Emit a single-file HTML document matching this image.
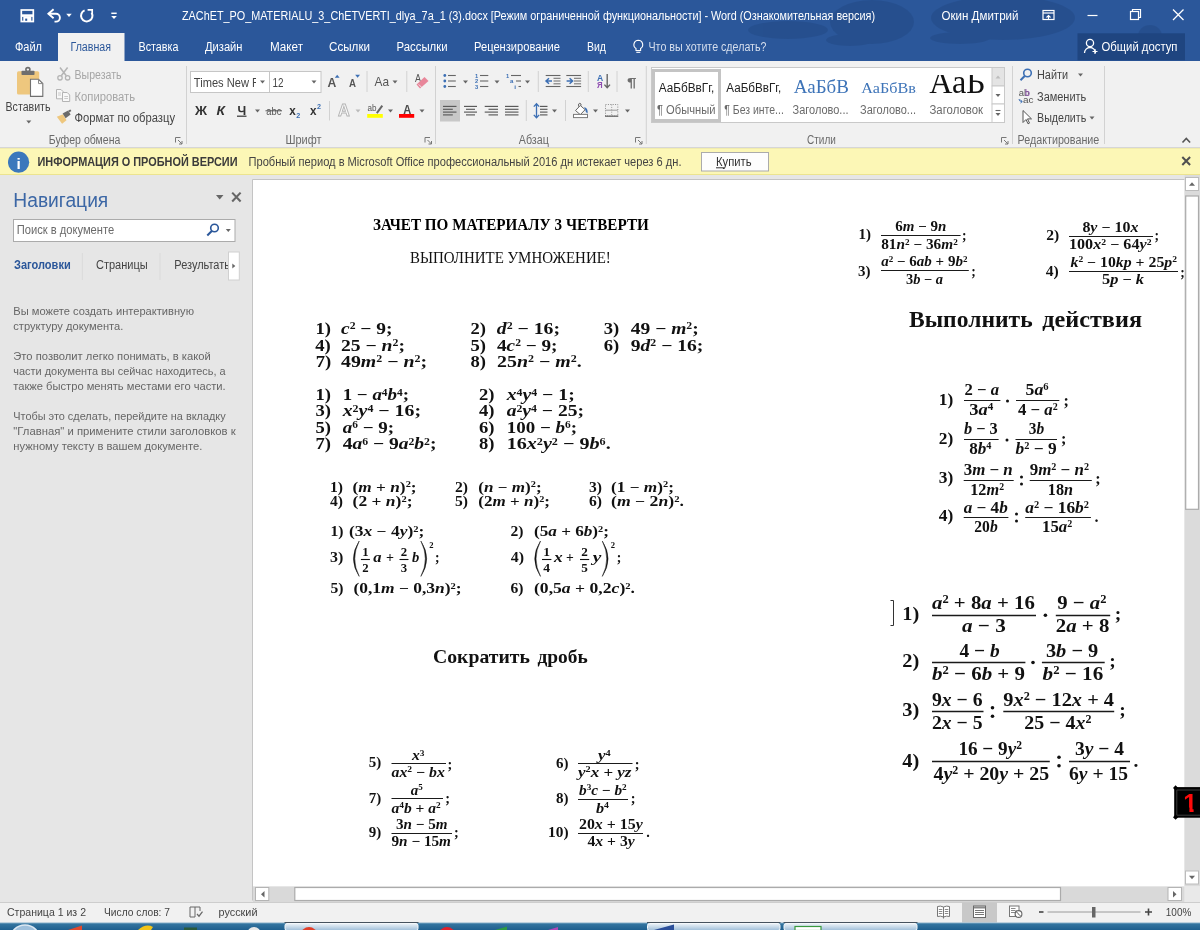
<!DOCTYPE html>
<html lang="ru"><head><meta charset="utf-8"><title>ZAChET_PO_MATERIALU_3_ChETVERTI_dlya_7a_1 (3).docx - Word</title>
<style>html,body{margin:0;padding:0;background:#e6e6e6;overflow:hidden}svg{display:block;will-change:transform}text{white-space:pre}</style></head>
<body><svg width="1200" height="930" viewBox="0 0 1200 930" font-family="'Liberation Sans',sans-serif">
<rect x="0" y="175" width="1200" height="748" fill="#e6e6e6" />
<rect x="252.5" y="180" width="932" height="706.5" fill="#fff" />
<line x1="252.5" y1="179.5" x2="1184.5" y2="179.5" stroke="#c4c4c4" stroke-width="1" />
<line x1="252.5" y1="179.5" x2="252.5" y2="886" stroke="#c4c4c4" stroke-width="1" />
<text x="13.3" y="206.8" font-size="20" fill="#3c67a5" textLength="95" lengthAdjust="spacingAndGlyphs" font-family="'Liberation Sans','DejaVu Sans',sans-serif" >Навигация</text>
<path d="M215.95,194.95 h7.5 l-3.75,4.5 z" fill="#666" />
<path d="M232.2,192.6 l8.4,8.8 M240.6,192.6 l-8.4,8.8" fill="none" stroke="#666" stroke-width="2.1" />
<rect x="13.5" y="219.5" width="221.5" height="22" fill="#fff" stroke="#ababab" stroke-width="1" />
<text x="16.7" y="234.3" font-size="12" fill="#6a6a6a" textLength="97.5" lengthAdjust="spacingAndGlyphs" font-family="'Liberation Sans','DejaVu Sans',sans-serif" >Поиск в документе</text>
<circle cx="214.5" cy="228" r="3.8" fill="none" stroke="#2b579a" stroke-width="1.6"/>
<line x1="211.8" y1="231" x2="207.3" y2="235.5" stroke="#2b579a" stroke-width="2" />
<path d="M225.8,229.0 h5 l-2.5,3 z" fill="#666" />
<text x="14" y="269" font-size="12" fill="#2b579a" textLength="56.7" lengthAdjust="spacingAndGlyphs" font-weight="bold" font-family="'Liberation Sans','DejaVu Sans',sans-serif" >Заголовки</text>
<text x="96" y="269" font-size="12" fill="#444" textLength="51.7" lengthAdjust="spacingAndGlyphs" font-family="'Liberation Sans','DejaVu Sans',sans-serif" >Страницы</text>
<clipPath id="cr"><rect x="170" y="255" width="58.5" height="22"/></clipPath>
<text x="174.3" y="269" font-size="12" fill="#444" textLength="57.8" lengthAdjust="spacingAndGlyphs" font-family="'Liberation Sans','DejaVu Sans',sans-serif" clip-path="url(#cr)">Результаты</text>
<line x1="82.3" y1="253" x2="82.3" y2="280" stroke="#dadada" stroke-width="1" />
<line x1="160" y1="253" x2="160" y2="280" stroke="#dadada" stroke-width="1" />
<rect x="228.5" y="252" width="10.8" height="28" fill="#fff" stroke="#d0d0d0" stroke-width="1" />
<path d="M232.3,263.5 l3,2.5 l-3,2.5 z" fill="#666" />
<text x="13.3" y="315" font-size="11.5" fill="#666" textLength="180.7" lengthAdjust="spacingAndGlyphs" font-family="'Liberation Sans','DejaVu Sans',sans-serif" >Вы можете создать интерактивную</text>
<text x="13.3" y="330" font-size="11.5" fill="#666" textLength="110" lengthAdjust="spacingAndGlyphs" font-family="'Liberation Sans','DejaVu Sans',sans-serif" >структуру документа.</text>
<text x="13.3" y="360" font-size="11.5" fill="#666" textLength="197.4" lengthAdjust="spacingAndGlyphs" font-family="'Liberation Sans','DejaVu Sans',sans-serif" >Это позволит легко понимать, в какой</text>
<text x="13.3" y="375" font-size="11.5" fill="#666" textLength="212.4" lengthAdjust="spacingAndGlyphs" font-family="'Liberation Sans','DejaVu Sans',sans-serif" >части документа вы сейчас находитесь, а</text>
<text x="13.3" y="390" font-size="11.5" fill="#666" textLength="212.4" lengthAdjust="spacingAndGlyphs" font-family="'Liberation Sans','DejaVu Sans',sans-serif" >также быстро менять местами его части.</text>
<text x="13.3" y="420" font-size="11.5" fill="#666" textLength="212.4" lengthAdjust="spacingAndGlyphs" font-family="'Liberation Sans','DejaVu Sans',sans-serif" >Чтобы это сделать, перейдите на вкладку</text>
<text x="13.3" y="435" font-size="11.5" fill="#666" textLength="222.4" lengthAdjust="spacingAndGlyphs" font-family="'Liberation Sans','DejaVu Sans',sans-serif" >"Главная" и примените стили заголовков к</text>
<text x="13.3" y="450" font-size="11.5" fill="#666" textLength="189" lengthAdjust="spacingAndGlyphs" font-family="'Liberation Sans','DejaVu Sans',sans-serif" >нужному тексту в вашем документе.</text>
<text x="373" y="230" font-size="16" fill="#000" textLength="275.8" lengthAdjust="spacingAndGlyphs" font-weight="bold" font-family="'Liberation Serif',serif" >ЗАЧЕТ ПО МАТЕРИАЛУ 3 ЧЕТВЕРТИ</text>
<text x="410" y="263" font-size="16" fill="#111" textLength="200.8" lengthAdjust="spacingAndGlyphs" font-family="'Liberation Serif',serif" >ВЫПОЛНИТЕ УМНОЖЕНИЕ!</text>
<text x="315.5" y="334.3" font-size="16.42" fill="#111" textLength="15.5" lengthAdjust="spacingAndGlyphs" font-weight="bold" font-family="'Liberation Serif','DejaVu Serif',serif" xml:space="preserve">1)</text>
<text x="341" y="334.3" font-size="16.42" fill="#111" textLength="51.5" lengthAdjust="spacingAndGlyphs" font-weight="bold" font-family="'Liberation Serif','DejaVu Serif',serif" xml:space="preserve"><tspan font-style="italic">c</tspan><tspan font-size="9.9" dy="-5.1">2</tspan><tspan dy="5.1"> − 9;</tspan></text>
<text x="470.5" y="334.3" font-size="16.42" fill="#111" textLength="15.5" lengthAdjust="spacingAndGlyphs" font-weight="bold" font-family="'Liberation Serif','DejaVu Serif',serif" xml:space="preserve">2)</text>
<text x="496.8" y="334.3" font-size="16.42" fill="#111" textLength="63.2" lengthAdjust="spacingAndGlyphs" font-weight="bold" font-family="'Liberation Serif','DejaVu Serif',serif" xml:space="preserve"><tspan font-style="italic">d</tspan><tspan font-size="9.9" dy="-5.1">2</tspan><tspan dy="5.1"> − 16;</tspan></text>
<text x="603.8" y="334.3" font-size="16.42" fill="#111" textLength="15.5" lengthAdjust="spacingAndGlyphs" font-weight="bold" font-family="'Liberation Serif','DejaVu Serif',serif" xml:space="preserve">3)</text>
<text x="630.8" y="334.3" font-size="16.42" fill="#111" textLength="67.9" lengthAdjust="spacingAndGlyphs" font-weight="bold" font-family="'Liberation Serif','DejaVu Serif',serif" xml:space="preserve">49 − <tspan font-style="italic">m</tspan><tspan font-size="9.9" dy="-5.1">2</tspan><tspan dy="5.1">;</tspan></text>
<text x="315.3" y="350.6" font-size="16.42" fill="#111" textLength="15.5" lengthAdjust="spacingAndGlyphs" font-weight="bold" font-family="'Liberation Serif','DejaVu Serif',serif" xml:space="preserve">4)</text>
<text x="341" y="350.6" font-size="16.42" fill="#111" textLength="64" lengthAdjust="spacingAndGlyphs" font-weight="bold" font-family="'Liberation Serif','DejaVu Serif',serif" xml:space="preserve">25 − <tspan font-style="italic">n</tspan><tspan font-size="9.9" dy="-5.1">2</tspan><tspan dy="5.1">;</tspan></text>
<text x="470.5" y="350.6" font-size="16.42" fill="#111" textLength="15.5" lengthAdjust="spacingAndGlyphs" font-weight="bold" font-family="'Liberation Serif','DejaVu Serif',serif" xml:space="preserve">5)</text>
<text x="497" y="350.6" font-size="16.42" fill="#111" textLength="60.5" lengthAdjust="spacingAndGlyphs" font-weight="bold" font-family="'Liberation Serif','DejaVu Serif',serif" xml:space="preserve">4<tspan font-style="italic">c</tspan><tspan font-size="9.9" dy="-5.1">2</tspan><tspan dy="5.1"> − 9;</tspan></text>
<text x="603.8" y="350.6" font-size="16.42" fill="#111" textLength="15.5" lengthAdjust="spacingAndGlyphs" font-weight="bold" font-family="'Liberation Serif','DejaVu Serif',serif" xml:space="preserve">6)</text>
<text x="630.8" y="350.6" font-size="16.42" fill="#111" textLength="72.5" lengthAdjust="spacingAndGlyphs" font-weight="bold" font-family="'Liberation Serif','DejaVu Serif',serif" xml:space="preserve">9<tspan font-style="italic">d</tspan><tspan font-size="9.9" dy="-5.1">2</tspan><tspan dy="5.1"> − 16;</tspan></text>
<text x="315.8" y="367" font-size="16.42" fill="#111" textLength="15.5" lengthAdjust="spacingAndGlyphs" font-weight="bold" font-family="'Liberation Serif','DejaVu Serif',serif" xml:space="preserve">7)</text>
<text x="341" y="367" font-size="16.42" fill="#111" textLength="86" lengthAdjust="spacingAndGlyphs" font-weight="bold" font-family="'Liberation Serif','DejaVu Serif',serif" xml:space="preserve">49<tspan font-style="italic">m</tspan><tspan font-size="9.9" dy="-5.1">2</tspan><tspan dy="5.1"> − </tspan><tspan font-style="italic">n</tspan><tspan font-size="9.9" dy="-5.1">2</tspan><tspan dy="5.1">;</tspan></text>
<text x="470.5" y="367" font-size="16.42" fill="#111" textLength="15.5" lengthAdjust="spacingAndGlyphs" font-weight="bold" font-family="'Liberation Serif','DejaVu Serif',serif" xml:space="preserve">8)</text>
<text x="497" y="367" font-size="16.42" fill="#111" textLength="84.8" lengthAdjust="spacingAndGlyphs" font-weight="bold" font-family="'Liberation Serif','DejaVu Serif',serif" xml:space="preserve">25<tspan font-style="italic">n</tspan><tspan font-size="9.9" dy="-5.1">2</tspan><tspan dy="5.1"> − </tspan><tspan font-style="italic">m</tspan><tspan font-size="9.9" dy="-5.1">2</tspan><tspan dy="5.1">.</tspan></text>
<text x="315.5" y="400" font-size="16.42" fill="#111" textLength="15.5" lengthAdjust="spacingAndGlyphs" font-weight="bold" font-family="'Liberation Serif','DejaVu Serif',serif" xml:space="preserve">1)</text>
<text x="342.7" y="400" font-size="16.42" fill="#111" textLength="66.3" lengthAdjust="spacingAndGlyphs" font-weight="bold" font-family="'Liberation Serif','DejaVu Serif',serif" xml:space="preserve">1 − <tspan font-style="italic">a</tspan><tspan font-size="9.9" dy="-4.4">4</tspan><tspan font-style="italic" dy="4.4">b</tspan><tspan font-size="9.9" dy="-4.4">4</tspan><tspan dy="4.4">;</tspan></text>
<text x="479" y="400" font-size="16.42" fill="#111" textLength="15.5" lengthAdjust="spacingAndGlyphs" font-weight="bold" font-family="'Liberation Serif','DejaVu Serif',serif" xml:space="preserve">2)</text>
<text x="506.7" y="400" font-size="16.42" fill="#111" textLength="68.0" lengthAdjust="spacingAndGlyphs" font-weight="bold" font-family="'Liberation Serif','DejaVu Serif',serif" xml:space="preserve"><tspan font-style="italic">x</tspan><tspan font-size="9.9" dy="-4.4">4</tspan><tspan font-style="italic" dy="4.4">y</tspan><tspan font-size="9.9" dy="-4.4">4</tspan><tspan dy="4.4"> − 1;</tspan></text>
<text x="315.5" y="416.3" font-size="16.42" fill="#111" textLength="15.5" lengthAdjust="spacingAndGlyphs" font-weight="bold" font-family="'Liberation Serif','DejaVu Serif',serif" xml:space="preserve">3)</text>
<text x="342.7" y="416.3" font-size="16.42" fill="#111" textLength="78.3" lengthAdjust="spacingAndGlyphs" font-weight="bold" font-family="'Liberation Serif','DejaVu Serif',serif" xml:space="preserve"><tspan font-style="italic">x</tspan><tspan font-size="9.9" dy="-4.4">2</tspan><tspan font-style="italic" dy="4.4">y</tspan><tspan font-size="9.9" dy="-4.4">4</tspan><tspan dy="4.4"> − 16;</tspan></text>
<text x="479" y="416.3" font-size="16.42" fill="#111" textLength="15.5" lengthAdjust="spacingAndGlyphs" font-weight="bold" font-family="'Liberation Serif','DejaVu Serif',serif" xml:space="preserve">4)</text>
<text x="506.7" y="416.3" font-size="16.42" fill="#111" textLength="77.3" lengthAdjust="spacingAndGlyphs" font-weight="bold" font-family="'Liberation Serif','DejaVu Serif',serif" xml:space="preserve"><tspan font-style="italic">a</tspan><tspan font-size="9.9" dy="-4.4">2</tspan><tspan font-style="italic" dy="4.4">y</tspan><tspan font-size="9.9" dy="-4.4">4</tspan><tspan dy="4.4"> − 25;</tspan></text>
<text x="315.5" y="432.7" font-size="16.42" fill="#111" textLength="15.5" lengthAdjust="spacingAndGlyphs" font-weight="bold" font-family="'Liberation Serif','DejaVu Serif',serif" xml:space="preserve">5)</text>
<text x="342.7" y="432.7" font-size="16.42" fill="#111" textLength="51.3" lengthAdjust="spacingAndGlyphs" font-weight="bold" font-family="'Liberation Serif','DejaVu Serif',serif" xml:space="preserve"><tspan font-style="italic">a</tspan><tspan font-size="9.9" dy="-4.4">6</tspan><tspan dy="4.4"> − 9;</tspan></text>
<text x="479" y="432.7" font-size="16.42" fill="#111" textLength="15.5" lengthAdjust="spacingAndGlyphs" font-weight="bold" font-family="'Liberation Serif','DejaVu Serif',serif" xml:space="preserve">6)</text>
<text x="506.7" y="432.7" font-size="16.42" fill="#111" textLength="70.3" lengthAdjust="spacingAndGlyphs" font-weight="bold" font-family="'Liberation Serif','DejaVu Serif',serif" xml:space="preserve">100 − <tspan font-style="italic">b</tspan><tspan font-size="9.9" dy="-4.4">6</tspan><tspan dy="4.4">;</tspan></text>
<text x="315.5" y="449.3" font-size="16.42" fill="#111" textLength="15.5" lengthAdjust="spacingAndGlyphs" font-weight="bold" font-family="'Liberation Serif','DejaVu Serif',serif" xml:space="preserve">7)</text>
<text x="342.7" y="449.3" font-size="16.42" fill="#111" textLength="93.8" lengthAdjust="spacingAndGlyphs" font-weight="bold" font-family="'Liberation Serif','DejaVu Serif',serif" xml:space="preserve">4<tspan font-style="italic">a</tspan><tspan font-size="9.9" dy="-4.4">6</tspan><tspan dy="4.4"> − 9</tspan><tspan font-style="italic">a</tspan><tspan font-size="9.9" dy="-4.4">2</tspan><tspan font-style="italic" dy="4.4">b</tspan><tspan font-size="9.9" dy="-4.4">2</tspan><tspan dy="4.4">;</tspan></text>
<text x="479" y="449.3" font-size="16.42" fill="#111" textLength="15.5" lengthAdjust="spacingAndGlyphs" font-weight="bold" font-family="'Liberation Serif','DejaVu Serif',serif" xml:space="preserve">8)</text>
<text x="506.7" y="449.3" font-size="16.42" fill="#111" textLength="104.0" lengthAdjust="spacingAndGlyphs" font-weight="bold" font-family="'Liberation Serif','DejaVu Serif',serif" xml:space="preserve">16<tspan font-style="italic">x</tspan><tspan font-size="9.9" dy="-4.4">2</tspan><tspan font-style="italic" dy="4.4">y</tspan><tspan font-size="9.9" dy="-4.4">2</tspan><tspan dy="4.4"> − 9</tspan><tspan font-style="italic">b</tspan><tspan font-size="9.9" dy="-4.4">6</tspan><tspan dy="4.4">.</tspan></text>
<text x="330" y="491.5" font-size="13.61" fill="#111" textLength="13" lengthAdjust="spacingAndGlyphs" font-weight="bold" font-family="'Liberation Serif','DejaVu Serif',serif" xml:space="preserve">1)</text>
<text x="352.6" y="491.5" font-size="13.61" fill="#111" textLength="64.0" lengthAdjust="spacingAndGlyphs" font-weight="bold" font-family="'Liberation Serif','DejaVu Serif',serif" xml:space="preserve">(<tspan font-style="italic">m</tspan> + <tspan font-style="italic">n</tspan>)<tspan font-size="8.2" dy="-4.2">2</tspan><tspan dy="4.2">;</tspan></text>
<text x="455" y="491.5" font-size="13.61" fill="#111" textLength="13" lengthAdjust="spacingAndGlyphs" font-weight="bold" font-family="'Liberation Serif','DejaVu Serif',serif" xml:space="preserve">2)</text>
<text x="478.3" y="491.5" font-size="13.61" fill="#111" textLength="63.4" lengthAdjust="spacingAndGlyphs" font-weight="bold" font-family="'Liberation Serif','DejaVu Serif',serif" xml:space="preserve">(<tspan font-style="italic">n</tspan> − <tspan font-style="italic">m</tspan>)<tspan font-size="8.2" dy="-4.2">2</tspan><tspan dy="4.2">;</tspan></text>
<text x="589" y="491.5" font-size="13.61" fill="#111" textLength="13" lengthAdjust="spacingAndGlyphs" font-weight="bold" font-family="'Liberation Serif','DejaVu Serif',serif" xml:space="preserve">3)</text>
<text x="611" y="491.5" font-size="13.61" fill="#111" textLength="63" lengthAdjust="spacingAndGlyphs" font-weight="bold" font-family="'Liberation Serif','DejaVu Serif',serif" xml:space="preserve">(1 − <tspan font-style="italic">m</tspan>)<tspan font-size="8.2" dy="-4.2">2</tspan><tspan dy="4.2">;</tspan></text>
<text x="330" y="506.2" font-size="13.61" fill="#111" textLength="13" lengthAdjust="spacingAndGlyphs" font-weight="bold" font-family="'Liberation Serif','DejaVu Serif',serif" xml:space="preserve">4)</text>
<text x="352.6" y="506.2" font-size="13.61" fill="#111" textLength="59.9" lengthAdjust="spacingAndGlyphs" font-weight="bold" font-family="'Liberation Serif','DejaVu Serif',serif" xml:space="preserve">(2 + <tspan font-style="italic">n</tspan>)<tspan font-size="8.2" dy="-4.2">2</tspan><tspan dy="4.2">;</tspan></text>
<text x="455" y="506.2" font-size="13.61" fill="#111" textLength="13" lengthAdjust="spacingAndGlyphs" font-weight="bold" font-family="'Liberation Serif','DejaVu Serif',serif" xml:space="preserve">5)</text>
<text x="478.3" y="506.2" font-size="13.61" fill="#111" textLength="71.7" lengthAdjust="spacingAndGlyphs" font-weight="bold" font-family="'Liberation Serif','DejaVu Serif',serif" xml:space="preserve">(2<tspan font-style="italic">m</tspan> + <tspan font-style="italic">n</tspan>)<tspan font-size="8.2" dy="-4.2">2</tspan><tspan dy="4.2">;</tspan></text>
<text x="589" y="506.2" font-size="13.61" fill="#111" textLength="13" lengthAdjust="spacingAndGlyphs" font-weight="bold" font-family="'Liberation Serif','DejaVu Serif',serif" xml:space="preserve">6)</text>
<text x="611" y="506.2" font-size="13.61" fill="#111" textLength="73" lengthAdjust="spacingAndGlyphs" font-weight="bold" font-family="'Liberation Serif','DejaVu Serif',serif" xml:space="preserve">(<tspan font-style="italic">m</tspan> − 2<tspan font-style="italic">n</tspan>)<tspan font-size="8.2" dy="-4.2">2</tspan><tspan dy="4.2">.</tspan></text>
<text x="330.5" y="536.3" font-size="13.61" fill="#111" textLength="13" lengthAdjust="spacingAndGlyphs" font-weight="bold" font-family="'Liberation Serif','DejaVu Serif',serif" xml:space="preserve">1)</text>
<text x="349" y="536.3" font-size="13.61" fill="#111" textLength="75.3" lengthAdjust="spacingAndGlyphs" font-weight="bold" font-family="'Liberation Serif','DejaVu Serif',serif" xml:space="preserve">(3<tspan font-style="italic">x</tspan> − 4<tspan font-style="italic">y</tspan>)<tspan font-size="8.2" dy="-4.2">2</tspan><tspan dy="4.2">;</tspan></text>
<text x="510.4" y="536.3" font-size="13.61" fill="#111" textLength="13" lengthAdjust="spacingAndGlyphs" font-weight="bold" font-family="'Liberation Serif','DejaVu Serif',serif" xml:space="preserve">2)</text>
<text x="534" y="536.3" font-size="13.61" fill="#111" textLength="75" lengthAdjust="spacingAndGlyphs" font-weight="bold" font-family="'Liberation Serif','DejaVu Serif',serif" xml:space="preserve">(5<tspan font-style="italic">a</tspan> + 6<tspan font-style="italic">b</tspan>)<tspan font-size="8.2" dy="-4.2">2</tspan><tspan dy="4.2">;</tspan></text>
<text x="330.5" y="593" font-size="13.61" fill="#111" textLength="13" lengthAdjust="spacingAndGlyphs" font-weight="bold" font-family="'Liberation Serif','DejaVu Serif',serif" xml:space="preserve">5)</text>
<text x="353.4" y="593" font-size="13.61" fill="#111" textLength="108.3" lengthAdjust="spacingAndGlyphs" font-weight="bold" font-family="'Liberation Serif','DejaVu Serif',serif" xml:space="preserve">(0,1<tspan font-style="italic">m</tspan> − 0,3<tspan font-style="italic">n</tspan>)<tspan font-size="8.2" dy="-4.2">2</tspan><tspan dy="4.2">;</tspan></text>
<text x="510.4" y="593" font-size="13.61" fill="#111" textLength="13" lengthAdjust="spacingAndGlyphs" font-weight="bold" font-family="'Liberation Serif','DejaVu Serif',serif" xml:space="preserve">6)</text>
<text x="534" y="593" font-size="13.61" fill="#111" textLength="101" lengthAdjust="spacingAndGlyphs" font-weight="bold" font-family="'Liberation Serif','DejaVu Serif',serif" xml:space="preserve">(0,5<tspan font-style="italic">a</tspan> + 0,2<tspan font-style="italic">c</tspan>)<tspan font-size="8.2" dy="-4.2">2</tspan><tspan dy="4.2">.</tspan></text>
<text x="330" y="562.3" font-size="13.61" fill="#111" textLength="13.3" lengthAdjust="spacingAndGlyphs" font-weight="bold" font-family="'Liberation Serif','DejaVu Serif',serif" xml:space="preserve">3)</text>
<path d="M359.2,541 Q347.7,558.7 359.2,576.4 Q350.29999999999995,558.7 359.2,541 z" fill="#111" stroke="#111" stroke-width="0.5" />
<text x="362.2" y="556" font-size="12.74" fill="#111" textLength="6.4" lengthAdjust="spacingAndGlyphs" font-weight="bold" font-family="'Liberation Serif','DejaVu Serif',serif" xml:space="preserve">1</text>
<line x1="360.9" y1="559.5" x2="369.9" y2="559.5" stroke="#111" stroke-width="1.1" />
<text x="362.2" y="572.1" font-size="12.74" fill="#111" textLength="6.4" lengthAdjust="spacingAndGlyphs" font-weight="bold" font-family="'Liberation Serif','DejaVu Serif',serif" xml:space="preserve">2</text>
<text x="373.3" y="562.3" font-size="13.61" fill="#111" textLength="8.3" lengthAdjust="spacingAndGlyphs" font-weight="bold" font-family="'Liberation Serif','DejaVu Serif',serif" xml:space="preserve"><tspan font-style="italic">a</tspan></text>
<text x="386" y="562.3" font-size="13.61" fill="#111" textLength="8" lengthAdjust="spacingAndGlyphs" font-weight="bold" font-family="'Liberation Serif','DejaVu Serif',serif" xml:space="preserve">+</text>
<text x="400.8" y="556" font-size="12.74" fill="#111" textLength="6.4" lengthAdjust="spacingAndGlyphs" font-weight="bold" font-family="'Liberation Serif','DejaVu Serif',serif" xml:space="preserve">2</text>
<line x1="399.5" y1="559.5" x2="408.5" y2="559.5" stroke="#111" stroke-width="1.1" />
<text x="400.8" y="572.1" font-size="12.74" fill="#111" textLength="6.4" lengthAdjust="spacingAndGlyphs" font-weight="bold" font-family="'Liberation Serif','DejaVu Serif',serif" xml:space="preserve">3</text>
<text x="412" y="562.3" font-size="13.61" fill="#111" textLength="7.3" lengthAdjust="spacingAndGlyphs" font-weight="bold" font-family="'Liberation Serif','DejaVu Serif',serif" xml:space="preserve"><tspan font-style="italic">b</tspan></text>
<path d="M420.9,541 Q432.4,558.7 420.9,576.4 Q429.8,558.7 420.9,541 z" fill="#111" stroke="#111" stroke-width="0.5" />
<text x="429.3" y="548" font-size="7.78" fill="#111" textLength="4.3" lengthAdjust="spacingAndGlyphs" font-weight="bold" font-family="'Liberation Serif','DejaVu Serif',serif" xml:space="preserve">2</text>
<text x="435" y="562.3" font-size="13.61" fill="#111" font-weight="bold" font-family="'Liberation Serif','DejaVu Serif',serif" xml:space="preserve">;</text>
<text x="510.7" y="562.3" font-size="13.61" fill="#111" textLength="13.3" lengthAdjust="spacingAndGlyphs" font-weight="bold" font-family="'Liberation Serif','DejaVu Serif',serif" xml:space="preserve">4)</text>
<path d="M540.5,541 Q529.0,558.7 540.5,576.4 Q531.6,558.7 540.5,541 z" fill="#111" stroke="#111" stroke-width="0.5" />
<text x="543.3" y="556" font-size="12.74" fill="#111" textLength="6.8" lengthAdjust="spacingAndGlyphs" font-weight="bold" font-family="'Liberation Serif','DejaVu Serif',serif" xml:space="preserve">1</text>
<line x1="542.0" y1="559.5" x2="551.3999999999999" y2="559.5" stroke="#111" stroke-width="1.1" />
<text x="543.3" y="572.1" font-size="12.74" fill="#111" textLength="6.8" lengthAdjust="spacingAndGlyphs" font-weight="bold" font-family="'Liberation Serif','DejaVu Serif',serif" xml:space="preserve">4</text>
<text x="554" y="562.3" font-size="13.61" fill="#111" textLength="8.7" lengthAdjust="spacingAndGlyphs" font-weight="bold" font-family="'Liberation Serif','DejaVu Serif',serif" xml:space="preserve"><tspan font-style="italic">x</tspan></text>
<text x="566" y="562.3" font-size="13.61" fill="#111" textLength="7.8" lengthAdjust="spacingAndGlyphs" font-weight="bold" font-family="'Liberation Serif','DejaVu Serif',serif" xml:space="preserve">+</text>
<text x="581.3" y="556" font-size="12.74" fill="#111" textLength="6.6" lengthAdjust="spacingAndGlyphs" font-weight="bold" font-family="'Liberation Serif','DejaVu Serif',serif" xml:space="preserve">2</text>
<line x1="580.0" y1="559.5" x2="589.1999999999999" y2="559.5" stroke="#111" stroke-width="1.1" />
<text x="581.3" y="572.1" font-size="12.74" fill="#111" textLength="6.6" lengthAdjust="spacingAndGlyphs" font-weight="bold" font-family="'Liberation Serif','DejaVu Serif',serif" xml:space="preserve">5</text>
<text x="592.7" y="562.3" font-size="13.61" fill="#111" textLength="8.6" lengthAdjust="spacingAndGlyphs" font-weight="bold" font-family="'Liberation Serif','DejaVu Serif',serif" xml:space="preserve"><tspan font-style="italic">y</tspan></text>
<path d="M602.3000000000001,541 Q613.8000000000001,558.7 602.3000000000001,576.4 Q611.2,558.7 602.3000000000001,541 z" fill="#111" stroke="#111" stroke-width="0.5" />
<text x="610.7" y="548" font-size="7.78" fill="#111" textLength="4.3" lengthAdjust="spacingAndGlyphs" font-weight="bold" font-family="'Liberation Serif','DejaVu Serif',serif" xml:space="preserve">2</text>
<text x="616.8" y="562.3" font-size="13.61" fill="#111" font-weight="bold" font-family="'Liberation Serif','DejaVu Serif',serif" xml:space="preserve">;</text>
<text x="433" y="663" font-size="19" fill="#111" textLength="97" lengthAdjust="spacingAndGlyphs" font-weight="bold" font-family="'Liberation Serif','DejaVu Serif',serif" >Сократить</text>
<text x="537.5" y="663" font-size="19" fill="#111" textLength="50.3" lengthAdjust="spacingAndGlyphs" font-weight="bold" font-family="'Liberation Serif','DejaVu Serif',serif" >дробь</text>
<text x="368.8" y="767.2" font-size="14.26" fill="#111" textLength="12.5" lengthAdjust="spacingAndGlyphs" font-weight="bold" font-family="'Liberation Serif','DejaVu Serif',serif" xml:space="preserve">5)</text>
<line x1="391.5" y1="763.5" x2="446" y2="763.5" stroke="#1a1a1a" stroke-width="1.2" />
<text x="412" y="760" font-size="14.26" fill="#111" textLength="12.5" lengthAdjust="spacingAndGlyphs" font-weight="bold" font-family="'Liberation Serif','DejaVu Serif',serif" xml:space="preserve"><tspan font-style="italic">x</tspan><tspan font-size="8.6" dy="-4.4">3</tspan></text>
<text x="391.5" y="776.8" font-size="14.26" fill="#111" textLength="53.3" lengthAdjust="spacingAndGlyphs" font-weight="bold" font-family="'Liberation Serif','DejaVu Serif',serif" xml:space="preserve"><tspan font-style="italic">ax</tspan><tspan font-size="8.6" dy="-4.4">2</tspan><tspan dy="4.4"> − </tspan><tspan font-style="italic">bx</tspan></text>
<text x="447.5" y="768.5" font-size="14.26" fill="#111" font-weight="bold" font-family="'Liberation Serif','DejaVu Serif',serif" xml:space="preserve">;</text>
<text x="556" y="767.6" font-size="14.26" fill="#111" textLength="12.5" lengthAdjust="spacingAndGlyphs" font-weight="bold" font-family="'Liberation Serif','DejaVu Serif',serif" xml:space="preserve">6)</text>
<line x1="578" y1="763.5" x2="632.5" y2="763.5" stroke="#1a1a1a" stroke-width="1.2" />
<text x="598" y="760" font-size="14.26" fill="#111" textLength="12.7" lengthAdjust="spacingAndGlyphs" font-weight="bold" font-family="'Liberation Serif','DejaVu Serif',serif" xml:space="preserve"><tspan font-style="italic">y</tspan><tspan font-size="8.6" dy="-4.4">4</tspan></text>
<text x="578" y="776.8" font-size="14.26" fill="#111" textLength="53.5" lengthAdjust="spacingAndGlyphs" font-weight="bold" font-family="'Liberation Serif','DejaVu Serif',serif" xml:space="preserve"><tspan font-style="italic">y</tspan><tspan font-size="8.6" dy="-4.4">2</tspan><tspan font-style="italic" dy="4.4">x</tspan> + <tspan font-style="italic">yz</tspan></text>
<text x="634.7" y="768.5" font-size="14.26" fill="#111" font-weight="bold" font-family="'Liberation Serif','DejaVu Serif',serif" xml:space="preserve">;</text>
<text x="368.8" y="803" font-size="14.26" fill="#111" textLength="12.5" lengthAdjust="spacingAndGlyphs" font-weight="bold" font-family="'Liberation Serif','DejaVu Serif',serif" xml:space="preserve">7)</text>
<line x1="391.5" y1="798.5" x2="443" y2="798.5" stroke="#1a1a1a" stroke-width="1.2" />
<text x="410.7" y="794.7" font-size="14.26" fill="#111" textLength="12.0" lengthAdjust="spacingAndGlyphs" font-weight="bold" font-family="'Liberation Serif','DejaVu Serif',serif" xml:space="preserve"><tspan font-style="italic">a</tspan><tspan font-size="8.6" dy="-4.4">5</tspan></text>
<text x="391.5" y="812.5" font-size="14.26" fill="#111" textLength="49.3" lengthAdjust="spacingAndGlyphs" font-weight="bold" font-family="'Liberation Serif','DejaVu Serif',serif" xml:space="preserve"><tspan font-style="italic">a</tspan><tspan font-size="8.6" dy="-4.4">4</tspan><tspan font-style="italic" dy="4.4">b</tspan> + <tspan font-style="italic">a</tspan><tspan font-size="8.6" dy="-4.4">2</tspan></text>
<text x="445.3" y="803" font-size="14.26" fill="#111" font-weight="bold" font-family="'Liberation Serif','DejaVu Serif',serif" xml:space="preserve">;</text>
<text x="556" y="803" font-size="14.26" fill="#111" textLength="12.5" lengthAdjust="spacingAndGlyphs" font-weight="bold" font-family="'Liberation Serif','DejaVu Serif',serif" xml:space="preserve">8)</text>
<line x1="578" y1="799.5" x2="628" y2="799.5" stroke="#1a1a1a" stroke-width="1.2" />
<text x="579" y="794.7" font-size="14.26" fill="#111" textLength="47.7" lengthAdjust="spacingAndGlyphs" font-weight="bold" font-family="'Liberation Serif','DejaVu Serif',serif" xml:space="preserve"><tspan font-style="italic">b</tspan><tspan font-size="8.6" dy="-4.4">3</tspan><tspan font-style="italic" dy="4.4">c</tspan> − <tspan font-style="italic">b</tspan><tspan font-size="8.6" dy="-4.4">2</tspan></text>
<text x="596" y="812.5" font-size="14.26" fill="#111" textLength="13" lengthAdjust="spacingAndGlyphs" font-weight="bold" font-family="'Liberation Serif','DejaVu Serif',serif" xml:space="preserve"><tspan font-style="italic">b</tspan><tspan font-size="8.6" dy="-4.4">4</tspan></text>
<text x="630.7" y="803" font-size="14.26" fill="#111" font-weight="bold" font-family="'Liberation Serif','DejaVu Serif',serif" xml:space="preserve">;</text>
<text x="368.8" y="837" font-size="14.26" fill="#111" textLength="12.5" lengthAdjust="spacingAndGlyphs" font-weight="bold" font-family="'Liberation Serif','DejaVu Serif',serif" xml:space="preserve">9)</text>
<line x1="391.5" y1="833.5" x2="452" y2="833.5" stroke="#1a1a1a" stroke-width="1.2" />
<text x="396" y="828.5" font-size="14.26" fill="#111" textLength="51.5" lengthAdjust="spacingAndGlyphs" font-weight="bold" font-family="'Liberation Serif','DejaVu Serif',serif" xml:space="preserve">3<tspan font-style="italic">n</tspan> − 5<tspan font-style="italic">m</tspan></text>
<text x="391.5" y="846" font-size="14.26" fill="#111" textLength="59.5" lengthAdjust="spacingAndGlyphs" font-weight="bold" font-family="'Liberation Serif','DejaVu Serif',serif" xml:space="preserve">9<tspan font-style="italic">n</tspan> − 15<tspan font-style="italic">m</tspan></text>
<text x="454" y="837" font-size="14.26" fill="#111" font-weight="bold" font-family="'Liberation Serif','DejaVu Serif',serif" xml:space="preserve">;</text>
<text x="548" y="837" font-size="14.26" fill="#111" textLength="20.5" lengthAdjust="spacingAndGlyphs" font-weight="bold" font-family="'Liberation Serif','DejaVu Serif',serif" xml:space="preserve">10)</text>
<line x1="578" y1="833.5" x2="643" y2="833.5" stroke="#1a1a1a" stroke-width="1.2" />
<text x="579" y="828.5" font-size="14.26" fill="#111" textLength="63.7" lengthAdjust="spacingAndGlyphs" font-weight="bold" font-family="'Liberation Serif','DejaVu Serif',serif" xml:space="preserve">20<tspan font-style="italic">x</tspan> + 15<tspan font-style="italic">y</tspan></text>
<text x="587.5" y="846" font-size="14.26" fill="#111" textLength="47.2" lengthAdjust="spacingAndGlyphs" font-weight="bold" font-family="'Liberation Serif','DejaVu Serif',serif" xml:space="preserve">4<tspan font-style="italic">x</tspan> + 3<tspan font-style="italic">y</tspan></text>
<text x="646.3" y="837" font-size="14.26" fill="#111" font-weight="bold" font-family="'Liberation Serif','DejaVu Serif',serif" xml:space="preserve">.</text>
<text x="858.5" y="238.8" font-size="13.61" fill="#111" textLength="12.5" lengthAdjust="spacingAndGlyphs" font-weight="bold" font-family="'Liberation Serif','DejaVu Serif',serif" xml:space="preserve">1)</text>
<line x1="881" y1="235.5" x2="960.6" y2="235.5" stroke="#1a1a1a" stroke-width="1.1" />
<text x="895.3" y="230.6" font-size="13.61" fill="#111" textLength="51.0" lengthAdjust="spacingAndGlyphs" font-weight="bold" font-family="'Liberation Serif','DejaVu Serif',serif" xml:space="preserve">6<tspan font-style="italic">m</tspan> − 9<tspan font-style="italic">n</tspan></text>
<text x="881.2" y="248.8" font-size="13.61" fill="#111" textLength="76.6" lengthAdjust="spacingAndGlyphs" font-weight="bold" font-family="'Liberation Serif','DejaVu Serif',serif" xml:space="preserve">81<tspan font-style="italic">n</tspan><tspan font-size="8.2" dy="-4.2">2</tspan><tspan dy="4.2"> − 36</tspan><tspan font-style="italic">m</tspan><tspan font-size="8.2" dy="-4.2">2</tspan></text>
<text x="962" y="239.5" font-size="13.61" fill="#111" font-weight="bold" font-family="'Liberation Serif','DejaVu Serif',serif" xml:space="preserve">;</text>
<text x="1046.2" y="240" font-size="13.61" fill="#111" textLength="13" lengthAdjust="spacingAndGlyphs" font-weight="bold" font-family="'Liberation Serif','DejaVu Serif',serif" xml:space="preserve">2)</text>
<line x1="1069" y1="236.5" x2="1153" y2="236.5" stroke="#1a1a1a" stroke-width="1.1" />
<text x="1082.4" y="231.5" font-size="13.61" fill="#111" textLength="56.1" lengthAdjust="spacingAndGlyphs" font-weight="bold" font-family="'Liberation Serif','DejaVu Serif',serif" xml:space="preserve">8<tspan font-style="italic">y</tspan> − 10<tspan font-style="italic">x</tspan></text>
<text x="1069" y="249.4" font-size="13.61" fill="#111" textLength="82.5" lengthAdjust="spacingAndGlyphs" font-weight="bold" font-family="'Liberation Serif','DejaVu Serif',serif" xml:space="preserve">100<tspan font-style="italic">x</tspan><tspan font-size="8.2" dy="-4.2">2</tspan><tspan dy="4.2"> − 64</tspan><tspan font-style="italic">y</tspan><tspan font-size="8.2" dy="-4.2">2</tspan></text>
<text x="1154.6" y="240.3" font-size="13.61" fill="#111" font-weight="bold" font-family="'Liberation Serif','DejaVu Serif',serif" xml:space="preserve">;</text>
<text x="858" y="275.6" font-size="13.61" fill="#111" textLength="12.5" lengthAdjust="spacingAndGlyphs" font-weight="bold" font-family="'Liberation Serif','DejaVu Serif',serif" xml:space="preserve">3)</text>
<line x1="881" y1="270.5" x2="968.8" y2="270.5" stroke="#1a1a1a" stroke-width="1.1" />
<text x="881.2" y="266.3" font-size="13.61" fill="#111" textLength="86.3" lengthAdjust="spacingAndGlyphs" font-weight="bold" font-family="'Liberation Serif','DejaVu Serif',serif" xml:space="preserve"><tspan font-style="italic">a</tspan><tspan font-size="8.2" dy="-4.2">2</tspan><tspan dy="4.2"> − 6</tspan><tspan font-style="italic">ab</tspan> + 9<tspan font-style="italic">b</tspan><tspan font-size="8.2" dy="-4.2">2</tspan></text>
<text x="906" y="283.8" font-size="13.61" fill="#111" textLength="37.1" lengthAdjust="spacingAndGlyphs" font-weight="bold" font-family="'Liberation Serif','DejaVu Serif',serif" xml:space="preserve">3<tspan font-style="italic">b</tspan> − <tspan font-style="italic">a</tspan></text>
<text x="971.3" y="276" font-size="13.61" fill="#111" font-weight="bold" font-family="'Liberation Serif','DejaVu Serif',serif" xml:space="preserve">;</text>
<text x="1045.8" y="275.6" font-size="13.61" fill="#111" textLength="13" lengthAdjust="spacingAndGlyphs" font-weight="bold" font-family="'Liberation Serif','DejaVu Serif',serif" xml:space="preserve">4)</text>
<line x1="1069" y1="271.5" x2="1178" y2="271.5" stroke="#1a1a1a" stroke-width="1.1" />
<text x="1070.5" y="266.5" font-size="13.61" fill="#111" textLength="106.5" lengthAdjust="spacingAndGlyphs" font-weight="bold" font-family="'Liberation Serif','DejaVu Serif',serif" xml:space="preserve"><tspan font-style="italic">k</tspan><tspan font-size="8.2" dy="-4.2">2</tspan><tspan dy="4.2"> − 10</tspan><tspan font-style="italic">kp</tspan> + 25<tspan font-style="italic">p</tspan><tspan font-size="8.2" dy="-4.2">2</tspan></text>
<text x="1102" y="284.4" font-size="13.61" fill="#111" textLength="42" lengthAdjust="spacingAndGlyphs" font-weight="bold" font-family="'Liberation Serif','DejaVu Serif',serif" xml:space="preserve">5<tspan font-style="italic">p</tspan> − <tspan font-style="italic">k</tspan></text>
<text x="1180.3" y="276.5" font-size="13.61" fill="#111" font-weight="bold" font-family="'Liberation Serif','DejaVu Serif',serif" xml:space="preserve">;</text>
<text x="909" y="326.5" font-size="23" fill="#111" textLength="123.6" lengthAdjust="spacingAndGlyphs" font-weight="bold" font-family="'Liberation Serif','DejaVu Serif',serif" >Выполнить</text>
<text x="1042.3" y="326.5" font-size="23" fill="#111" textLength="99.7" lengthAdjust="spacingAndGlyphs" font-weight="bold" font-family="'Liberation Serif','DejaVu Serif',serif" >действия</text>
<text x="938.8" y="405.2" font-size="16.2" fill="#111" textLength="14.5" lengthAdjust="spacingAndGlyphs" font-weight="bold" font-family="'Liberation Serif','DejaVu Serif',serif" xml:space="preserve">1)</text>
<line x1="964" y1="400.5" x2="1000.4" y2="400.5" stroke="#1a1a1a" stroke-width="1.2" />
<text x="964.5" y="395.4" font-size="16.2" fill="#111" textLength="34.5" lengthAdjust="spacingAndGlyphs" font-weight="bold" font-family="'Liberation Serif','DejaVu Serif',serif" xml:space="preserve">2 − <tspan font-style="italic">a</tspan></text>
<text x="969.3" y="415.4" font-size="16.2" fill="#111" textLength="24.0" lengthAdjust="spacingAndGlyphs" font-weight="bold" font-family="'Liberation Serif','DejaVu Serif',serif" xml:space="preserve">3<tspan font-style="italic">a</tspan><tspan font-size="9.7" dy="-5">4</tspan></text>
<circle cx="1007.5" cy="401" r="1.5" fill="#111"/>
<line x1="1016" y1="400.5" x2="1059.3" y2="400.5" stroke="#1a1a1a" stroke-width="1.2" />
<text x="1025.6" y="395.4" font-size="16.2" fill="#111" textLength="23.0" lengthAdjust="spacingAndGlyphs" font-weight="bold" font-family="'Liberation Serif','DejaVu Serif',serif" xml:space="preserve">5<tspan font-style="italic">a</tspan><tspan font-size="9.7" dy="-5">6</tspan></text>
<text x="1018" y="415.4" font-size="16.2" fill="#111" textLength="39.7" lengthAdjust="spacingAndGlyphs" font-weight="bold" font-family="'Liberation Serif','DejaVu Serif',serif" xml:space="preserve">4 − <tspan font-style="italic">a</tspan><tspan font-size="9.7" dy="-5">2</tspan></text>
<text x="1063.5" y="405.5" font-size="16.2" fill="#111" font-weight="bold" font-family="'Liberation Serif','DejaVu Serif',serif" xml:space="preserve">;</text>
<text x="938.8" y="443.8" font-size="16.2" fill="#111" textLength="14.5" lengthAdjust="spacingAndGlyphs" font-weight="bold" font-family="'Liberation Serif','DejaVu Serif',serif" xml:space="preserve">2)</text>
<line x1="964" y1="439.5" x2="998.6" y2="439.5" stroke="#1a1a1a" stroke-width="1.2" />
<text x="964" y="434.4" font-size="16.2" fill="#111" textLength="33.7" lengthAdjust="spacingAndGlyphs" font-weight="bold" font-family="'Liberation Serif','DejaVu Serif',serif" xml:space="preserve"><tspan font-style="italic">b</tspan> − 3</text>
<text x="969.3" y="454.3" font-size="16.2" fill="#111" textLength="22.2" lengthAdjust="spacingAndGlyphs" font-weight="bold" font-family="'Liberation Serif','DejaVu Serif',serif" xml:space="preserve">8<tspan font-style="italic">b</tspan><tspan font-size="9.7" dy="-5">4</tspan></text>
<circle cx="1007" cy="440" r="1.5" fill="#111"/>
<line x1="1015.5" y1="439.5" x2="1057" y2="439.5" stroke="#1a1a1a" stroke-width="1.2" />
<text x="1028.8" y="434.4" font-size="16.2" fill="#111" textLength="15.4" lengthAdjust="spacingAndGlyphs" font-weight="bold" font-family="'Liberation Serif','DejaVu Serif',serif" xml:space="preserve">3<tspan font-style="italic">b</tspan></text>
<text x="1015.5" y="454.3" font-size="16.2" fill="#111" textLength="41.1" lengthAdjust="spacingAndGlyphs" font-weight="bold" font-family="'Liberation Serif','DejaVu Serif',serif" xml:space="preserve"><tspan font-style="italic">b</tspan><tspan font-size="9.7" dy="-5">2</tspan><tspan dy="5"> − 9</tspan></text>
<text x="1061" y="444.3" font-size="16.2" fill="#111" font-weight="bold" font-family="'Liberation Serif','DejaVu Serif',serif" xml:space="preserve">;</text>
<text x="938.8" y="483.2" font-size="16.2" fill="#111" textLength="14.5" lengthAdjust="spacingAndGlyphs" font-weight="bold" font-family="'Liberation Serif','DejaVu Serif',serif" xml:space="preserve">3)</text>
<line x1="963.7" y1="480.5" x2="1013.7" y2="480.5" stroke="#1a1a1a" stroke-width="1.2" />
<text x="963.7" y="474.7" font-size="16.2" fill="#111" textLength="49.1" lengthAdjust="spacingAndGlyphs" font-weight="bold" font-family="'Liberation Serif','DejaVu Serif',serif" xml:space="preserve">3<tspan font-style="italic">m</tspan> − <tspan font-style="italic">n</tspan></text>
<text x="970.2" y="494.7" font-size="16.2" fill="#111" textLength="33.8" lengthAdjust="spacingAndGlyphs" font-weight="bold" font-family="'Liberation Serif','DejaVu Serif',serif" xml:space="preserve">12<tspan font-style="italic">m</tspan><tspan font-size="9.7" dy="-5">2</tspan></text>
<circle cx="1021.5" cy="477.0" r="1.5" fill="#111"/>
<circle cx="1021.5" cy="484.0" r="1.5" fill="#111"/>
<line x1="1029.7" y1="480.5" x2="1091.8" y2="480.5" stroke="#1a1a1a" stroke-width="1.2" />
<text x="1029.7" y="474.7" font-size="16.2" fill="#111" textLength="59.3" lengthAdjust="spacingAndGlyphs" font-weight="bold" font-family="'Liberation Serif','DejaVu Serif',serif" xml:space="preserve">9<tspan font-style="italic">m</tspan><tspan font-size="9.7" dy="-5">2</tspan><tspan dy="5"> − </tspan><tspan font-style="italic">n</tspan><tspan font-size="9.7" dy="-5">2</tspan></text>
<text x="1047.8" y="494.7" font-size="16.2" fill="#111" textLength="25.2" lengthAdjust="spacingAndGlyphs" font-weight="bold" font-family="'Liberation Serif','DejaVu Serif',serif" xml:space="preserve">18<tspan font-style="italic">n</tspan></text>
<text x="1095.3" y="484" font-size="16.2" fill="#111" font-weight="bold" font-family="'Liberation Serif','DejaVu Serif',serif" xml:space="preserve">;</text>
<text x="938.8" y="521.4" font-size="16.2" fill="#111" textLength="14.5" lengthAdjust="spacingAndGlyphs" font-weight="bold" font-family="'Liberation Serif','DejaVu Serif',serif" xml:space="preserve">4)</text>
<line x1="963.7" y1="517.5" x2="1008.4" y2="517.5" stroke="#1a1a1a" stroke-width="1.2" />
<text x="963.7" y="512.5" font-size="16.2" fill="#111" textLength="44.1" lengthAdjust="spacingAndGlyphs" font-weight="bold" font-family="'Liberation Serif','DejaVu Serif',serif" xml:space="preserve"><tspan font-style="italic">a</tspan> − 4<tspan font-style="italic">b</tspan></text>
<text x="974.3" y="532" font-size="16.2" fill="#111" textLength="23.4" lengthAdjust="spacingAndGlyphs" font-weight="bold" font-family="'Liberation Serif','DejaVu Serif',serif" xml:space="preserve">20<tspan font-style="italic">b</tspan></text>
<circle cx="1016.5" cy="514.0" r="1.5" fill="#111"/>
<circle cx="1016.5" cy="521.0" r="1.5" fill="#111"/>
<line x1="1025.2" y1="517.5" x2="1090.9" y2="517.5" stroke="#1a1a1a" stroke-width="1.2" />
<text x="1025.2" y="512.5" font-size="16.2" fill="#111" textLength="63.8" lengthAdjust="spacingAndGlyphs" font-weight="bold" font-family="'Liberation Serif','DejaVu Serif',serif" xml:space="preserve"><tspan font-style="italic">a</tspan><tspan font-size="9.7" dy="-5">2</tspan><tspan dy="5"> − 16</tspan><tspan font-style="italic">b</tspan><tspan font-size="9.7" dy="-5">2</tspan></text>
<text x="1042" y="532" font-size="16.2" fill="#111" textLength="30.2" lengthAdjust="spacingAndGlyphs" font-weight="bold" font-family="'Liberation Serif','DejaVu Serif',serif" xml:space="preserve">15<tspan font-style="italic">a</tspan><tspan font-size="9.7" dy="-5">2</tspan></text>
<text x="1094.5" y="521.5" font-size="16.2" fill="#111" font-weight="bold" font-family="'Liberation Serif','DejaVu Serif',serif" xml:space="preserve">.</text>
<path d="M890.5,600.5 h3 v25 h-3" fill="none" stroke="#333" stroke-width="1" />
<text x="902.2" y="619.8" font-size="19.44" fill="#111" textLength="17" lengthAdjust="spacingAndGlyphs" font-weight="bold" font-family="'Liberation Serif','DejaVu Serif',serif" xml:space="preserve">1)</text>
<line x1="932" y1="615.5" x2="1036" y2="615.5" stroke="#1a1a1a" stroke-width="1.4" />
<text x="932" y="608.8" font-size="19.44" fill="#111" textLength="102.8" lengthAdjust="spacingAndGlyphs" font-weight="bold" font-family="'Liberation Serif','DejaVu Serif',serif" xml:space="preserve"><tspan font-style="italic">a</tspan><tspan font-size="11.7" dy="-6">2</tspan><tspan dy="6"> + 8</tspan><tspan font-style="italic">a</tspan> + 16</text>
<text x="962" y="632.4" font-size="19.44" fill="#111" textLength="43.8" lengthAdjust="spacingAndGlyphs" font-weight="bold" font-family="'Liberation Serif','DejaVu Serif',serif" xml:space="preserve"><tspan font-style="italic">a</tspan> − 3</text>
<circle cx="1045.4" cy="615.2" r="1.8" fill="#111"/>
<line x1="1055.8" y1="615.5" x2="1110.2" y2="615.5" stroke="#1a1a1a" stroke-width="1.4" />
<text x="1057.3" y="608.8" font-size="19.44" fill="#111" textLength="49.2" lengthAdjust="spacingAndGlyphs" font-weight="bold" font-family="'Liberation Serif','DejaVu Serif',serif" xml:space="preserve">9 − <tspan font-style="italic">a</tspan><tspan font-size="11.7" dy="-6">2</tspan></text>
<text x="1055.8" y="632.4" font-size="19.44" fill="#111" textLength="53.5" lengthAdjust="spacingAndGlyphs" font-weight="bold" font-family="'Liberation Serif','DejaVu Serif',serif" xml:space="preserve">2<tspan font-style="italic">a</tspan> + 8</text>
<text x="1114.8" y="620" font-size="19.44" fill="#111" font-weight="bold" font-family="'Liberation Serif','DejaVu Serif',serif" xml:space="preserve">;</text>
<text x="902.2" y="666.5" font-size="19.44" fill="#111" textLength="17" lengthAdjust="spacingAndGlyphs" font-weight="bold" font-family="'Liberation Serif','DejaVu Serif',serif" xml:space="preserve">2)</text>
<line x1="932" y1="662.5" x2="1025.4" y2="662.5" stroke="#1a1a1a" stroke-width="1.4" />
<text x="959.5" y="656.6" font-size="19.44" fill="#111" textLength="40.1" lengthAdjust="spacingAndGlyphs" font-weight="bold" font-family="'Liberation Serif','DejaVu Serif',serif" xml:space="preserve">4 − <tspan font-style="italic">b</tspan></text>
<text x="932" y="680.2" font-size="19.44" fill="#111" textLength="93" lengthAdjust="spacingAndGlyphs" font-weight="bold" font-family="'Liberation Serif','DejaVu Serif',serif" xml:space="preserve"><tspan font-style="italic">b</tspan><tspan font-size="11.7" dy="-6">2</tspan><tspan dy="6"> − 6</tspan><tspan font-style="italic">b</tspan> + 9</text>
<circle cx="1033" cy="662.5" r="1.8" fill="#111"/>
<line x1="1041.9" y1="662.5" x2="1104.7" y2="662.5" stroke="#1a1a1a" stroke-width="1.4" />
<text x="1045.9" y="656.6" font-size="19.44" fill="#111" textLength="52.4" lengthAdjust="spacingAndGlyphs" font-weight="bold" font-family="'Liberation Serif','DejaVu Serif',serif" xml:space="preserve">3<tspan font-style="italic">b</tspan> − 9</text>
<text x="1042.6" y="680.2" font-size="19.44" fill="#111" textLength="60.6" lengthAdjust="spacingAndGlyphs" font-weight="bold" font-family="'Liberation Serif','DejaVu Serif',serif" xml:space="preserve"><tspan font-style="italic">b</tspan><tspan font-size="11.7" dy="-6">2</tspan><tspan dy="6"> − 16</tspan></text>
<text x="1109.3" y="667" font-size="19.44" fill="#111" font-weight="bold" font-family="'Liberation Serif','DejaVu Serif',serif" xml:space="preserve">;</text>
<text x="902.2" y="715.5" font-size="19.44" fill="#111" textLength="17" lengthAdjust="spacingAndGlyphs" font-weight="bold" font-family="'Liberation Serif','DejaVu Serif',serif" xml:space="preserve">3)</text>
<line x1="932" y1="711.5" x2="983.5" y2="711.5" stroke="#1a1a1a" stroke-width="1.4" />
<text x="932" y="705.8" font-size="19.44" fill="#111" textLength="50.6" lengthAdjust="spacingAndGlyphs" font-weight="bold" font-family="'Liberation Serif','DejaVu Serif',serif" xml:space="preserve">9<tspan font-style="italic">x</tspan> − 6</text>
<text x="932" y="728.9" font-size="19.44" fill="#111" textLength="50.6" lengthAdjust="spacingAndGlyphs" font-weight="bold" font-family="'Liberation Serif','DejaVu Serif',serif" xml:space="preserve">2<tspan font-style="italic">x</tspan> − 5</text>
<circle cx="992.5" cy="707.7" r="1.8" fill="#111"/>
<circle cx="992.5" cy="716.3" r="1.8" fill="#111"/>
<line x1="1003.3" y1="711.5" x2="1114.2" y2="711.5" stroke="#1a1a1a" stroke-width="1.4" />
<text x="1003.3" y="705.8" font-size="19.44" fill="#111" textLength="110.7" lengthAdjust="spacingAndGlyphs" font-weight="bold" font-family="'Liberation Serif','DejaVu Serif',serif" xml:space="preserve">9<tspan font-style="italic">x</tspan><tspan font-size="11.7" dy="-6">2</tspan><tspan dy="6"> − 12</tspan><tspan font-style="italic">x</tspan> + 4</text>
<text x="1024.3" y="728.9" font-size="19.44" fill="#111" textLength="67.2" lengthAdjust="spacingAndGlyphs" font-weight="bold" font-family="'Liberation Serif','DejaVu Serif',serif" xml:space="preserve">25 − 4<tspan font-style="italic">x</tspan><tspan font-size="11.7" dy="-6">2</tspan></text>
<text x="1119.2" y="716" font-size="19.44" fill="#111" font-weight="bold" font-family="'Liberation Serif','DejaVu Serif',serif" xml:space="preserve">;</text>
<text x="902.2" y="766.8" font-size="19.44" fill="#111" textLength="17" lengthAdjust="spacingAndGlyphs" font-weight="bold" font-family="'Liberation Serif','DejaVu Serif',serif" xml:space="preserve">4)</text>
<line x1="932" y1="761.5" x2="1049.8" y2="761.5" stroke="#1a1a1a" stroke-width="1.4" />
<text x="958.4" y="755.1" font-size="19.44" fill="#111" textLength="63.6" lengthAdjust="spacingAndGlyphs" font-weight="bold" font-family="'Liberation Serif','DejaVu Serif',serif" xml:space="preserve">16 − 9<tspan font-style="italic">y</tspan><tspan font-size="11.7" dy="-6">2</tspan></text>
<text x="933.5" y="779.6" font-size="19.44" fill="#111" textLength="115.7" lengthAdjust="spacingAndGlyphs" font-weight="bold" font-family="'Liberation Serif','DejaVu Serif',serif" xml:space="preserve">4<tspan font-style="italic">y</tspan><tspan font-size="11.7" dy="-6">2</tspan><tspan dy="6"> + 20</tspan><tspan font-style="italic">y</tspan> + 25</text>
<circle cx="1059" cy="757.2" r="1.8" fill="#111"/>
<circle cx="1059" cy="765.8" r="1.8" fill="#111"/>
<line x1="1069" y1="761.5" x2="1130" y2="761.5" stroke="#1a1a1a" stroke-width="1.4" />
<text x="1075" y="755.1" font-size="19.44" fill="#111" textLength="49" lengthAdjust="spacingAndGlyphs" font-weight="bold" font-family="'Liberation Serif','DejaVu Serif',serif" xml:space="preserve">3<tspan font-style="italic">y</tspan> − 4</text>
<text x="1069" y="779.6" font-size="19.44" fill="#111" textLength="59" lengthAdjust="spacingAndGlyphs" font-weight="bold" font-family="'Liberation Serif','DejaVu Serif',serif" xml:space="preserve">6<tspan font-style="italic">y</tspan> + 15</text>
<text x="1133.5" y="767" font-size="19.44" fill="#111" font-weight="bold" font-family="'Liberation Serif','DejaVu Serif',serif" xml:space="preserve">.</text>
<rect x="1184.5" y="175" width="15.5" height="711" fill="#dbdbdb" />
<rect x="1185.5" y="177.5" width="13" height="13" fill="#fff" stroke="#bcbcbc" stroke-width="1" />
<path d="M1189.0,185.75 h6 l-3.0,-3.5 z" fill="#666" />
<rect x="1185.7" y="196" width="12.8" height="313.3" fill="#fff" stroke="#ababab" stroke-width="1.2" />
<rect x="1185.5" y="871" width="13" height="13" fill="#fff" stroke="#bcbcbc" stroke-width="1" />
<path d="M1189.0,875.75 h6 l-3.0,3.5 z" fill="#666" />
<rect x="253" y="886.5" width="931.5" height="15.5" fill="#d9d9d9" />
<line x1="252.5" y1="886" x2="252.5" y2="900.5" stroke="#c4c4c4" stroke-width="1" />
<rect x="255.5" y="887.5" width="13.3" height="13" fill="#fff" stroke="#b4b4b4" stroke-width="1" />
<path d="M264.5,891 l-3.5,3.2 l3.5,3.2 z" fill="#666" />
<rect x="294.8" y="887.5" width="765.7" height="13" fill="#fff" stroke="#ababab" stroke-width="1.2" />
<rect x="1168" y="887.5" width="13.5" height="13" fill="#fff" stroke="#b4b4b4" stroke-width="1" />
<path d="M1173,891 l3.5,3.2 l-3.5,3.2 z" fill="#666" />
<rect x="1184.5" y="886.5" width="15.5" height="15.5" fill="#e9e9e9" />
<rect x="1174.2" y="787.1" width="25.8" height="30.6" fill="#000" />
<rect x="1176.8" y="790" width="24" height="25.2" fill="none" stroke="#3c3c3c" stroke-width="1" />
<path d="M1175.6,785.3 l2.6,2.6 l-2.6,2.6 l-2.6,-2.6 z M1175.6,814.6 l2.6,2.6 l-2.6,2.6 l-2.6,-2.6 z" fill="#000" />
<text x="1197.2" y="811.6" font-size="25" fill="#ff0a0a" font-weight="bold" font-family="'Liberation Sans','DejaVu Sans',sans-serif" text-anchor="end" >1</text>
<rect x="1181" y="807.6" width="8.4" height="5" fill="#000" />
<rect x="1193.6" y="807.6" width="6.4" height="5" fill="#000" />
<rect x="0" y="902" width="1200" height="20.5" fill="#f1f1f1" />
<line x1="0" y1="902.5" x2="1200" y2="902.5" stroke="#cdcdcd" stroke-width="1" />
<text x="7" y="916" font-size="11.5" fill="#444" textLength="79" lengthAdjust="spacingAndGlyphs" font-family="'Liberation Sans','DejaVu Sans',sans-serif" >Страница 1 из 2</text>
<text x="104" y="916" font-size="11.5" fill="#444" textLength="66" lengthAdjust="spacingAndGlyphs" font-family="'Liberation Sans','DejaVu Sans',sans-serif" >Число слов: 7</text>
<path d="M190,907 h5 v10 h-5 z M195,907 h5 v4" fill="none" stroke="#666" stroke-width="1" />
<path d="M197,914 l2,2.2 l3.5,-4.5" fill="none" stroke="#666" stroke-width="1.2" />
<text x="218.5" y="916" font-size="11.5" fill="#444" textLength="39" lengthAdjust="spacingAndGlyphs" font-family="'Liberation Sans','DejaVu Sans',sans-serif" >русский</text>
<path d="M937.5,906.5 q3,-1 6,0.5 q3,-1.5 6,-0.5 v10 q-3,-1 -6,0.5 q-3,-1.5 -6,-0.5 z" fill="#fff" stroke="#777" stroke-width="1" />
<line x1="943.5" y1="907" x2="943.5" y2="918.5" stroke="#777" stroke-width="1" />
<line x1="938.8" y1="909.5" x2="942.3" y2="909.5" stroke="#8a8a8a" stroke-width="1" />
<line x1="944.8" y1="909.5" x2="948.3" y2="909.5" stroke="#8a8a8a" stroke-width="1" />
<line x1="938.8" y1="911.5" x2="942.3" y2="911.5" stroke="#8a8a8a" stroke-width="1" />
<line x1="944.8" y1="911.5" x2="948.3" y2="911.5" stroke="#8a8a8a" stroke-width="1" />
<line x1="938.8" y1="913.5" x2="942.3" y2="913.5" stroke="#8a8a8a" stroke-width="1" />
<line x1="944.8" y1="913.5" x2="948.3" y2="913.5" stroke="#8a8a8a" stroke-width="1" />
<rect x="962" y="902.5" width="35" height="20" fill="#c8c8c8" />
<rect x="973.5" y="906" width="12" height="11.5" fill="#fff" stroke="#6a6a6a" stroke-width="1" />
<rect x="974" y="906.5" width="11" height="2" fill="#8a8a8a" />
<line x1="975" y1="910.5" x2="984" y2="910.5" stroke="#777" stroke-width="1" />
<line x1="975" y1="912.5" x2="984" y2="912.5" stroke="#777" stroke-width="1" />
<line x1="975" y1="914.5" x2="984" y2="914.5" stroke="#777" stroke-width="1" />
<rect x="1009.5" y="906" width="9.5" height="10.5" fill="#fff" stroke="#777" stroke-width="1" />
<line x1="1011" y1="908.5" x2="1015.5" y2="908.5" stroke="#8a8a8a" stroke-width="1" />
<line x1="1011" y1="910.5" x2="1015.5" y2="910.5" stroke="#8a8a8a" stroke-width="1" />
<line x1="1011" y1="912.5" x2="1015.5" y2="912.5" stroke="#8a8a8a" stroke-width="1" />
<circle cx="1018.5" cy="914" r="3.4" fill="#fff" stroke="#666" stroke-width="1.1"/>
<path d="M1016.3,912.3 q2.5,0.5 2,2 q2,0.5 2.3,2" fill="none" stroke="#777" stroke-width="1" />
<line x1="1039" y1="912" x2="1043.5" y2="912" stroke="#444" stroke-width="1.6" />
<line x1="1047.5" y1="912" x2="1140.5" y2="912" stroke="#9a9a9a" stroke-width="1" />
<rect x="1092" y="907" width="3.5" height="10.5" fill="#666" />
<path d="M1145,912 h7 M1148.5,908.5 v7" fill="none" stroke="#444" stroke-width="1.6" />
<text x="1165.8" y="916" font-size="11.5" fill="#444" textLength="25.5" lengthAdjust="spacingAndGlyphs" font-family="'Liberation Sans','DejaVu Sans',sans-serif" >100%</text>
<linearGradient id="tb" x1="0" y1="0" x2="0" y2="1"><stop offset="0" stop-color="#8fb6cf"/><stop offset="0.22" stop-color="#33749f"/><stop offset="1" stop-color="#1f5f8e"/></linearGradient>
<linearGradient id="tbh" x1="0" y1="0" x2="0" y2="1"><stop offset="0" stop-color="#eef4f9"/><stop offset="1" stop-color="#9dbdd8"/></linearGradient>
<rect x="0" y="922.5" width="1200" height="7.5" fill="url(#tb)" />
<rect x="285" y="923.5" width="133" height="7" fill="url(#tbh)" stroke="#f4f8fb" stroke-width="1" rx="2" />
<line x1="284.5" y1="922.5" x2="418.5" y2="922.5" stroke="#46525e" stroke-width="1" />
<rect x="647.5" y="923.5" width="132.5" height="7" fill="url(#tbh)" stroke="#f4f8fb" stroke-width="1" rx="2" />
<line x1="647.0" y1="922.5" x2="780.5" y2="922.5" stroke="#46525e" stroke-width="1" />
<rect x="784" y="923.5" width="133" height="7" fill="url(#tbh)" stroke="#f4f8fb" stroke-width="1" rx="2" />
<line x1="783.5" y1="922.5" x2="917.5" y2="922.5" stroke="#46525e" stroke-width="1" />
<circle cx="25" cy="940" r="15" fill="#9fc0dc" stroke="#dde8f2" stroke-width="1.5"/>
<path d="M68,930 l14,-4.5 v4.5 z" fill="#e2482d" />
<path d="M138,930 q8,-7 15,-3 l-2,3 z" fill="#f2c419" />
<rect x="184" y="927.5" width="13" height="3" fill="#2a5a3c" />
<circle cx="254" cy="934" r="7" fill="#e8e8e8"/>
<circle cx="309" cy="935" r="8" fill="#e2402b"/><circle cx="447" cy="935" r="8" fill="#e2202b"/>
<path d="M495,930 l12,-3.5 v3.5 z" fill="#2e9a45" />
<path d="M548,930 l10,-3 v3 z" fill="#b048b8" />
<path d="M654,930 l20,-5.5 v5.5 z" fill="#2b4f9a" />
<rect x="795" y="926.5" width="26" height="4" fill="#fff" stroke="#3a9a3f" stroke-width="1.2" />
<rect x="0" y="0" width="1200" height="61" fill="#2b579a" />
<g fill="#234a86" opacity="0.55"><ellipse cx="788" cy="30" rx="40" ry="9"/><ellipse cx="872" cy="22" rx="42" ry="22"/><ellipse cx="850" cy="40" rx="24" ry="6"/><ellipse cx="1003" cy="18" rx="72" ry="22"/><ellipse cx="960" cy="38" rx="30" ry="6"/><ellipse cx="1150" cy="36" rx="12" ry="11"/></g>
<rect x="21.3" y="10" width="12" height="11.5" fill="none" stroke="#fff" stroke-width="1.7" />
<rect x="21" y="14.3" width="12.5" height="2.6" fill="#fff" />
<rect x="23.3" y="16.5" width="8" height="5" fill="#fff" />
<rect x="25.2" y="18.6" width="2" height="2.2" fill="#2b579a" />
<path d="M48.5,13.8 h7.5 a3.9,3.9 0 0 1 0,7.8 h-1.5" fill="none" stroke="#fff" stroke-width="1.9" />
<path d="M53.6,9.3 l-5.2,4.5 l5.2,4.5" fill="none" stroke="#fff" stroke-width="1.9" />
<path d="M66.25,13.700000000000001 h5.5 l-2.75,3.2 z" fill="#fff" />
<path d="M84.6,10.4 a5.7,5.7 0 1 0 7,2.3" fill="none" stroke="#fff" stroke-width="2" />
<path d="M87.6,9.9 h4.6 v4.6" fill="none" stroke="#fff" stroke-width="1.7" />
<line x1="111.3" y1="13.3" x2="116.7" y2="13.3" stroke="#fff" stroke-width="1.5" />
<path d="M111.2,15.9 h5.6 l-2.8,3.2 z" fill="#fff" />
<text x="182" y="19.5" font-size="12" fill="#fff" textLength="693" lengthAdjust="spacingAndGlyphs" font-family="'Liberation Sans','DejaVu Sans',sans-serif" >ZAChET_PO_MATERIALU_3_ChETVERTI_dlya_7a_1 (3).docx [Режим ограниченной функциональности] - Word (Ознакомительная версия)</text>
<text x="941.5" y="19.5" font-size="12" fill="#fff" textLength="77" lengthAdjust="spacingAndGlyphs" font-family="'Liberation Sans','DejaVu Sans',sans-serif" >Окин Дмитрий</text>
<rect x="1043" y="10.5" width="11" height="9" fill="none" stroke="#fff" stroke-width="1.2" />
<line x1="1043" y1="13" x2="1054" y2="13" stroke="#fff" stroke-width="1.2" />
<path d="M1046.5,17.5 l2,-2 l2,2" fill="none" stroke="#fff" stroke-width="1.1" />
<line x1="1048.5" y1="15.5" x2="1048.5" y2="19" stroke="#fff" stroke-width="1.1" />
<line x1="1087.5" y1="15.5" x2="1097.5" y2="15.5" stroke="#fff" stroke-width="1.2" />
<rect x="1130.5" y="11.5" width="8" height="8" fill="none" stroke="#fff" stroke-width="1.2" />
<path d="M1132.5,11.5 v-2 h8 v8 h-2" fill="none" stroke="#fff" stroke-width="1.2" />
<path d="M1173,9.5 l10.5,10.5 M1183.5,9.5 l-10.5,10.5" fill="none" stroke="#fff" stroke-width="1.3" />
<rect x="58" y="33" width="66.5" height="28" fill="#f1f1f1" />
<text x="15" y="50.5" font-size="12.5" fill="#fff" textLength="27" lengthAdjust="spacingAndGlyphs" font-family="'Liberation Sans','DejaVu Sans',sans-serif" >Файл</text>
<text x="138.5" y="50.5" font-size="12.5" fill="#fff" textLength="40" lengthAdjust="spacingAndGlyphs" font-family="'Liberation Sans','DejaVu Sans',sans-serif" >Вставка</text>
<text x="205" y="50.5" font-size="12.5" fill="#fff" textLength="37.5" lengthAdjust="spacingAndGlyphs" font-family="'Liberation Sans','DejaVu Sans',sans-serif" >Дизайн</text>
<text x="270" y="50.5" font-size="12.5" fill="#fff" textLength="33" lengthAdjust="spacingAndGlyphs" font-family="'Liberation Sans','DejaVu Sans',sans-serif" >Макет</text>
<text x="329" y="50.5" font-size="12.5" fill="#fff" textLength="41" lengthAdjust="spacingAndGlyphs" font-family="'Liberation Sans','DejaVu Sans',sans-serif" >Ссылки</text>
<text x="396.5" y="50.5" font-size="12.5" fill="#fff" textLength="51" lengthAdjust="spacingAndGlyphs" font-family="'Liberation Sans','DejaVu Sans',sans-serif" >Рассылки</text>
<text x="474" y="50.5" font-size="12.5" fill="#fff" textLength="86" lengthAdjust="spacingAndGlyphs" font-family="'Liberation Sans','DejaVu Sans',sans-serif" >Рецензирование</text>
<text x="587" y="50.5" font-size="12.5" fill="#fff" textLength="19" lengthAdjust="spacingAndGlyphs" font-family="'Liberation Sans','DejaVu Sans',sans-serif" >Вид</text>
<text x="70.5" y="50.5" font-size="12.5" fill="#2b579a" textLength="40.5" lengthAdjust="spacingAndGlyphs" font-family="'Liberation Sans','DejaVu Sans',sans-serif" >Главная</text>
<path d="M638.3,40.2 a4.5,4.5 0 0 1 2.3,8.3 v2 h-4.6 v-2 a4.5,4.5 0 0 1 2.3,-8.3 z" fill="none" stroke="#fff" stroke-width="1.1" />
<line x1="636.3" y1="52.3" x2="640.3" y2="52.3" stroke="#fff" stroke-width="1.1" />
<text x="648.5" y="50.5" font-size="12" fill="#d5deed" textLength="118" lengthAdjust="spacingAndGlyphs" font-family="'Liberation Sans','DejaVu Sans',sans-serif" >Что вы хотите сделать?</text>
<rect x="1077.5" y="33.3" width="107.5" height="27" fill="#1f4580" />
<circle cx="1090" cy="43" r="3.6" fill="none" stroke="#fff" stroke-width="1.3"/>
<path d="M1084.5,53 a5.5,5.5 0 0 1 11,0" fill="none" stroke="#fff" stroke-width="1.3" />
<path d="M1095,49 v5 M1092.5,51.5 h5" fill="none" stroke="#fff" stroke-width="1.2" />
<text x="1101.5" y="50.5" font-size="12.5" fill="#fff" textLength="76" lengthAdjust="spacingAndGlyphs" font-family="'Liberation Sans','DejaVu Sans',sans-serif" >Общий доступ</text>
<rect x="0" y="61" width="1200" height="87" fill="#f1f1f1" />
<line x1="0" y1="147.5" x2="1200" y2="147.5" stroke="#d6d6d6" stroke-width="1" />
<rect x="17" y="71.2" width="22.2" height="23.3" fill="#eec77e" rx="1.5" />
<circle cx="27.9" cy="69.6" r="2" fill="none" stroke="#6e6e6e" stroke-width="1.6"/>
<rect x="21.5" y="70.8" width="13" height="4.3" fill="#6e6e6e" rx="0.8" />
<path d="M30.5,79.3 h8 l4.3,4.3 v12.8 h-12.3 z" fill="#fff" stroke="#707070" stroke-width="1.1" />
<path d="M38.5,79.3 v4.3 h4.3" fill="none" stroke="#8a8a8a" stroke-width="1" />
<text x="5.5" y="111" font-size="12.5" fill="#444444" textLength="45" lengthAdjust="spacingAndGlyphs" font-family="'Liberation Sans','DejaVu Sans',sans-serif" >Вставить</text>
<path d="M26.3,120.5 h5 l-2.5,3 z" fill="#666" />
<path d="M60,67.5 l6.3,8.3 M67.6,67.5 l-6.3,8.3" fill="none" stroke="#b4b4b4" stroke-width="1.5" />
<circle cx="60" cy="77.8" r="2.2" fill="none" stroke="#b4b4b4" stroke-width="1.3"/><circle cx="67.6" cy="77.8" r="2.2" fill="none" stroke="#b4b4b4" stroke-width="1.3"/>
<text x="74.5" y="78.8" font-size="12.5" fill="#a6a6a6" textLength="47" lengthAdjust="spacingAndGlyphs" font-family="'Liberation Sans','DejaVu Sans',sans-serif" >Вырезать</text>
<path d="M56.5,89.5 h4.5 l2.3,2.3 v7 h-6.8 z" fill="#f8f8f8" stroke="#b4b4b4" stroke-width="1" />
<path d="M62.5,92.5 h4.7 l2.5,2.5 v6.5 h-7.2 z" fill="#f8f8f8" stroke="#b4b4b4" stroke-width="1" />
<line x1="58" y1="93" x2="61" y2="93" stroke="#c4c4c4" stroke-width="0.9" />
<line x1="58" y1="95" x2="61" y2="95" stroke="#c4c4c4" stroke-width="0.9" />
<line x1="64.3" y1="96.5" x2="68" y2="96.5" stroke="#c4c4c4" stroke-width="0.9" />
<line x1="64.3" y1="98.5" x2="68" y2="98.5" stroke="#c4c4c4" stroke-width="0.9" />
<text x="74.5" y="100.6" font-size="12.5" fill="#a6a6a6" textLength="60.5" lengthAdjust="spacingAndGlyphs" font-family="'Liberation Sans','DejaVu Sans',sans-serif" >Копировать</text>
<path d="M56.8,116.8 l6.3,-2.6 l3.4,6 l-4.4,3.6 z" fill="#eec77e" />
<path d="M62.6,113.6 l5.6,-3 l2.4,4 l-5,3.6 z" fill="#6a6a6a" />
<path d="M68.4,110.6 l2,-1.2 l1,1.7 l-2,1.2 z" fill="#6a6a6a" />
<text x="74.5" y="122" font-size="12.5" fill="#444444" textLength="100.5" lengthAdjust="spacingAndGlyphs" font-family="'Liberation Sans','DejaVu Sans',sans-serif" >Формат по образцу</text>
<text x="48.8" y="143.5" font-size="12" fill="#6a6a6a" textLength="71.5" lengthAdjust="spacingAndGlyphs" font-family="'Liberation Sans','DejaVu Sans',sans-serif" >Буфер обмена</text>
<path d="M175.5,142.5 v-5 h5 M178.0,140.0 l4,4 M182.0,141.0 v3 h-3" fill="none" stroke="#777" stroke-width="1" />
<line x1="186.5" y1="66" x2="186.5" y2="144" stroke="#d2d2d2" stroke-width="1" />
<rect x="190.5" y="71.5" width="79" height="21" fill="#fff" stroke="#c6c6c6" stroke-width="1" />
<rect x="269.5" y="71.5" width="51.5" height="21" fill="#fff" stroke="#c6c6c6" stroke-width="1" />
<clipPath id="cfn"><rect x="191" y="72" width="65" height="20"/></clipPath>
<text x="193.8" y="86.5" font-size="12.5" fill="#444444" font-family="'Liberation Sans','DejaVu Sans',sans-serif" clip-path="url(#cfn)" textLength="94" lengthAdjust="spacingAndGlyphs">Times New Roman</text>
<path d="M260.0,80.5 h5 l-2.5,3 z" fill="#666" />
<text x="272.5" y="86.5" font-size="12.5" fill="#444444" textLength="11" lengthAdjust="spacingAndGlyphs" font-family="'Liberation Sans','DejaVu Sans',sans-serif" >12</text>
<path d="M311.5,80.5 h5 l-2.5,3 z" fill="#666" />
<text x="327.6" y="86.9" font-size="12.4" fill="#555" textLength="8.8" lengthAdjust="spacingAndGlyphs" font-weight="bold" font-family="'Liberation Sans','DejaVu Sans',sans-serif" >A</text>
<path d="M334.8,77.8 h4.8 l-2.4,-3 z" fill="#3c6fb4" />
<text x="348.9" y="86.9" font-size="10" fill="#555" textLength="7" lengthAdjust="spacingAndGlyphs" font-weight="bold" font-family="'Liberation Sans','DejaVu Sans',sans-serif" >A</text>
<path d="M355.20000000000005,74.8 h4.8 l-2.4,3 z" fill="#3c6fb4" />
<line x1="367" y1="71" x2="367" y2="92" stroke="#d2d2d2" stroke-width="1" />
<text x="374.5" y="86" font-size="13" fill="#555" textLength="14.5" lengthAdjust="spacingAndGlyphs" font-family="'Liberation Sans','DejaVu Sans',sans-serif" >Aa</text>
<path d="M392.5,80.5 h5 l-2.5,3 z" fill="#666" />
<line x1="406.8" y1="71" x2="406.8" y2="92" stroke="#d2d2d2" stroke-width="1" />
<text x="415" y="82" font-size="10" fill="#555" textLength="6" lengthAdjust="spacingAndGlyphs" font-family="'Liberation Sans','DejaVu Sans',sans-serif" >A</text>
<path d="M424.5,77 l4,4 l-8.5,7.5 l-3.5,-4 z" fill="#e8869a" />
<path d="M417.5,85.6 l3.6,3.6" fill="none" stroke="#f1f1f1" stroke-width="0.9" transform="translate(1.2,-1.2)"/>
<text x="195" y="115" font-size="13" fill="#333" textLength="12" lengthAdjust="spacingAndGlyphs" font-weight="bold" font-family="'Liberation Sans','DejaVu Sans',sans-serif" >Ж</text>
<text x="216.5" y="115" font-size="13" fill="#333" textLength="8.5" lengthAdjust="spacingAndGlyphs" font-weight="bold" font-family="'Liberation Sans','DejaVu Sans',sans-serif" font-style="italic" >К</text>
<text x="237.5" y="114.5" font-size="13" fill="#333" textLength="8.7" lengthAdjust="spacingAndGlyphs" font-weight="bold" font-family="'Liberation Sans','DejaVu Sans',sans-serif" >Ч</text>
<line x1="237" y1="116.2" x2="246.5" y2="116.2" stroke="#333" stroke-width="1.2" />
<path d="M255.0,109.5 h5 l-2.5,3 z" fill="#666" />
<text x="266.3" y="114.5" font-size="11.5" fill="#555" textLength="15" lengthAdjust="spacingAndGlyphs" font-family="'Liberation Sans','DejaVu Sans',sans-serif" >abc</text>
<line x1="265.5" y1="110.8" x2="282" y2="110.8" stroke="#555" stroke-width="1" />
<text x="289.3" y="115" font-size="13" fill="#333" textLength="6.5" lengthAdjust="spacingAndGlyphs" font-weight="bold" font-family="'Liberation Sans','DejaVu Sans',sans-serif" >x</text>
<text x="296.3" y="117.5" font-size="7" fill="#3c6fb4" textLength="4" lengthAdjust="spacingAndGlyphs" font-weight="bold" font-family="'Liberation Sans','DejaVu Sans',sans-serif" >2</text>
<text x="310" y="115" font-size="13" fill="#333" textLength="6.5" lengthAdjust="spacingAndGlyphs" font-weight="bold" font-family="'Liberation Sans','DejaVu Sans',sans-serif" >x</text>
<text x="317" y="108.5" font-size="7" fill="#3c6fb4" textLength="4" lengthAdjust="spacingAndGlyphs" font-weight="bold" font-family="'Liberation Sans','DejaVu Sans',sans-serif" >2</text>
<line x1="329.5" y1="101" x2="329.5" y2="120.5" stroke="#d2d2d2" stroke-width="1" />
<text x="338" y="116" font-size="16.5" fill="#fafafa" textLength="11.8" lengthAdjust="spacingAndGlyphs" font-weight="bold" font-family="'Liberation Sans','DejaVu Sans',sans-serif" stroke="#b4b4b4" stroke-width="0.9">A</text>
<path d="M355.5,109.5 h5 l-2.5,3 z" fill="#bbb" />
<text x="367.5" y="110.5" font-size="9.5" fill="#555" textLength="9" lengthAdjust="spacingAndGlyphs" font-family="'Liberation Sans','DejaVu Sans',sans-serif" >ab</text>
<path d="M376,112.5 l5.5,-7.5 l1.6,1.2 l-5.5,7.5 z" fill="#666" />
<rect x="367.2" y="114" width="15.6" height="3.8" fill="#ffff00" />
<path d="M388.0,109.5 h5 l-2.5,3 z" fill="#666" />
<text x="403.3" y="114" font-size="12.6" fill="#4a4a4a" textLength="8" lengthAdjust="spacingAndGlyphs" font-weight="bold" font-family="'Liberation Sans','DejaVu Sans',sans-serif" >A</text>
<rect x="399" y="114" width="15.2" height="3.8" fill="#ff0000" />
<path d="M419.5,109.5 h5 l-2.5,3 z" fill="#666" />
<text x="285.5" y="143.5" font-size="12" fill="#6a6a6a" textLength="36" lengthAdjust="spacingAndGlyphs" font-family="'Liberation Sans','DejaVu Sans',sans-serif" >Шрифт</text>
<path d="M425,142.5 v-5 h5 M427.5,140.0 l4,4 M431.5,141.0 v3 h-3" fill="none" stroke="#777" stroke-width="1" />
<line x1="435.5" y1="66" x2="435.5" y2="144" stroke="#d2d2d2" stroke-width="1" />
<circle cx="444.8" cy="75.5" r="1.4" fill="#3c6fb4"/>
<line x1="448" y1="75.5" x2="455.8" y2="75.5" stroke="#666" stroke-width="1.1" />
<circle cx="444.8" cy="81" r="1.4" fill="#3c6fb4"/>
<line x1="448" y1="81" x2="455.8" y2="81" stroke="#666" stroke-width="1.1" />
<circle cx="444.8" cy="86.5" r="1.4" fill="#3c6fb4"/>
<line x1="448" y1="86.5" x2="455.8" y2="86.5" stroke="#666" stroke-width="1.1" />
<path d="M463.0,80.5 h5 l-2.5,3 z" fill="#666" />
<text x="475" y="77.7" font-size="6" fill="#3c6fb4" textLength="3.2" lengthAdjust="spacingAndGlyphs" font-weight="bold" font-family="'Liberation Sans','DejaVu Sans',sans-serif" >1</text>
<line x1="480" y1="75.5" x2="488.3" y2="75.5" stroke="#666" stroke-width="1.1" />
<text x="475" y="83.2" font-size="6" fill="#3c6fb4" textLength="3.2" lengthAdjust="spacingAndGlyphs" font-weight="bold" font-family="'Liberation Sans','DejaVu Sans',sans-serif" >2</text>
<line x1="480" y1="81" x2="488.3" y2="81" stroke="#666" stroke-width="1.1" />
<text x="475" y="88.7" font-size="6" fill="#3c6fb4" textLength="3.2" lengthAdjust="spacingAndGlyphs" font-weight="bold" font-family="'Liberation Sans','DejaVu Sans',sans-serif" >3</text>
<line x1="480" y1="86.5" x2="488.3" y2="86.5" stroke="#666" stroke-width="1.1" />
<path d="M494.5,80.5 h5 l-2.5,3 z" fill="#666" />
<text x="506" y="77.7" font-size="6" fill="#3c6fb4" textLength="3.2" lengthAdjust="spacingAndGlyphs" font-weight="bold" font-family="'Liberation Sans','DejaVu Sans',sans-serif" >1</text>
<line x1="511" y1="75.5" x2="521" y2="75.5" stroke="#666" stroke-width="1.1" />
<text x="510" y="83" font-size="6" fill="#3c6fb4" textLength="3.4" lengthAdjust="spacingAndGlyphs" font-weight="bold" font-family="'Liberation Sans','DejaVu Sans',sans-serif" >a</text>
<line x1="516" y1="81" x2="521" y2="81" stroke="#666" stroke-width="1.1" />
<text x="514.3" y="88.7" font-size="6" fill="#3c6fb4" textLength="1.8" lengthAdjust="spacingAndGlyphs" font-weight="bold" font-family="'Liberation Sans','DejaVu Sans',sans-serif" >i</text>
<line x1="518.5" y1="86.5" x2="521" y2="86.5" stroke="#666" stroke-width="1.1" />
<path d="M525.0,80.5 h5 l-2.5,3 z" fill="#666" />
<line x1="538.3" y1="71" x2="538.3" y2="92" stroke="#d2d2d2" stroke-width="1" />
<line x1="545.7" y1="75.5" x2="560.5" y2="75.5" stroke="#666" stroke-width="1.1" />
<line x1="545.7" y1="86.5" x2="560.5" y2="86.5" stroke="#666" stroke-width="1.1" />
<line x1="553.5" y1="78.3" x2="560.5" y2="78.3" stroke="#777" stroke-width="1.1" />
<line x1="553.5" y1="81" x2="560.5" y2="81" stroke="#777" stroke-width="1.1" />
<line x1="553.5" y1="83.8" x2="560.5" y2="83.8" stroke="#777" stroke-width="1.1" />
<line x1="566.3" y1="75.5" x2="581.0999999999999" y2="75.5" stroke="#666" stroke-width="1.1" />
<line x1="566.3" y1="86.5" x2="581.0999999999999" y2="86.5" stroke="#666" stroke-width="1.1" />
<line x1="574" y1="78.3" x2="581.0999999999999" y2="78.3" stroke="#777" stroke-width="1.1" />
<line x1="574" y1="81" x2="581.0999999999999" y2="81" stroke="#777" stroke-width="1.1" />
<line x1="574" y1="83.8" x2="581.0999999999999" y2="83.8" stroke="#777" stroke-width="1.1" />
<path d="M552,81 h-5.8 M549,78.2 l-3,2.8 l3,2.8" fill="none" stroke="#3c6fb4" stroke-width="1.5" />
<path d="M566.6,81 h5.8 M569.6,78.2 l3,2.8 l-3,2.8" fill="none" stroke="#3c6fb4" stroke-width="1.5" />
<line x1="588.3" y1="71" x2="588.3" y2="92" stroke="#d2d2d2" stroke-width="1" />
<text x="597" y="80.5" font-size="9" fill="#3c6fb4" textLength="6.2" lengthAdjust="spacingAndGlyphs" font-weight="bold" font-family="'Liberation Sans','DejaVu Sans',sans-serif" >А</text>
<text x="597" y="87.9" font-size="8.2" fill="#8e4bb0" textLength="5.6" lengthAdjust="spacingAndGlyphs" font-weight="bold" font-family="'Liberation Sans','DejaVu Sans',sans-serif" >Я</text>
<path d="M607.2,74 v13 M604.4,84.6 l2.8,3.2 l2.8,-3.2" fill="none" stroke="#666" stroke-width="1.4" />
<line x1="617" y1="71" x2="617" y2="92" stroke="#d2d2d2" stroke-width="1" />
<text x="627" y="86.8" font-size="13.5" fill="#6e6e6e" textLength="9.5" lengthAdjust="spacingAndGlyphs" font-weight="bold" font-family="'Liberation Sans','DejaVu Sans',sans-serif" >¶</text>
<rect x="440" y="100" width="20" height="21.5" fill="#c8c8c8" />
<line x1="443" y1="106.4" x2="456.5" y2="106.4" stroke="#5a5a5a" stroke-width="1.15" />
<line x1="443" y1="109.3" x2="452.8" y2="109.3" stroke="#5a5a5a" stroke-width="1.15" />
<line x1="443" y1="112.1" x2="456.5" y2="112.1" stroke="#5a5a5a" stroke-width="1.15" />
<line x1="443" y1="114.9" x2="452.8" y2="114.9" stroke="#5a5a5a" stroke-width="1.15" />
<line x1="464" y1="106.4" x2="477" y2="106.4" stroke="#5a5a5a" stroke-width="1.15" />
<line x1="466" y1="109.3" x2="475" y2="109.3" stroke="#5a5a5a" stroke-width="1.15" />
<line x1="464" y1="112.1" x2="477" y2="112.1" stroke="#5a5a5a" stroke-width="1.15" />
<line x1="466" y1="114.9" x2="475" y2="114.9" stroke="#5a5a5a" stroke-width="1.15" />
<line x1="484.7" y1="106.4" x2="498" y2="106.4" stroke="#5a5a5a" stroke-width="1.15" />
<line x1="488.5" y1="109.3" x2="498" y2="109.3" stroke="#5a5a5a" stroke-width="1.15" />
<line x1="484.7" y1="112.1" x2="498" y2="112.1" stroke="#5a5a5a" stroke-width="1.15" />
<line x1="488.5" y1="114.9" x2="498" y2="114.9" stroke="#5a5a5a" stroke-width="1.15" />
<line x1="505" y1="106.4" x2="518.5" y2="106.4" stroke="#5a5a5a" stroke-width="1.15" />
<line x1="505" y1="109.3" x2="518.5" y2="109.3" stroke="#5a5a5a" stroke-width="1.15" />
<line x1="505" y1="112.1" x2="518.5" y2="112.1" stroke="#5a5a5a" stroke-width="1.15" />
<line x1="505" y1="114.9" x2="518.5" y2="114.9" stroke="#5a5a5a" stroke-width="1.15" />
<line x1="526.3" y1="100" x2="526.3" y2="121" stroke="#d2d2d2" stroke-width="1" />
<line x1="540" y1="106.4" x2="547.5" y2="106.4" stroke="#5a5a5a" stroke-width="1.15" />
<line x1="540" y1="109.3" x2="547.5" y2="109.3" stroke="#5a5a5a" stroke-width="1.15" />
<line x1="540" y1="112.1" x2="547.5" y2="112.1" stroke="#5a5a5a" stroke-width="1.15" />
<line x1="540" y1="114.9" x2="547.5" y2="114.9" stroke="#5a5a5a" stroke-width="1.15" />
<path d="M536.5,104 v13.5 M533.8,106.6 l2.7,-2.9 l2.7,2.9 M533.8,114.9 l2.7,2.9 l2.7,-2.9" fill="none" stroke="#3c6fb4" stroke-width="1.3" />
<path d="M552.0,109.5 h5 l-2.5,3 z" fill="#666" />
<line x1="565.5" y1="100" x2="565.5" y2="121" stroke="#d2d2d2" stroke-width="1" />
<path d="M575.5,110.5 l4.8,-5 l4.8,4.2 l-4.8,5 z" fill="#fff" stroke="#666" stroke-width="1" />
<path d="M578.6,106.6 v-2.6 q1.2,-1.4 2.4,0 v1.6" fill="none" stroke="#666" stroke-width="1" />
<path d="M584,107.2 q4.2,0.6 3.6,6.2 q-2.2,-0.4 -2.2,-3.4 z" fill="#3c6fb4" />
<rect x="573.5" y="114.4" width="14" height="3.2" fill="#fff" stroke="#7a7a7a" stroke-width="1" />
<path d="M593.0,109.5 h5 l-2.5,3 z" fill="#666" />
<rect x="605.5" y="104.5" width="12.3" height="11.5" fill="none" stroke="#8a8a8a" stroke-width="1" stroke-dasharray="1 1.4"/>
<line x1="605.5" y1="110.2" x2="617.8" y2="110.2" stroke="#9a9a9a" stroke-width="1" />
<line x1="611.7" y1="104.5" x2="611.7" y2="116" stroke="#9a9a9a" stroke-width="1" stroke-dasharray="1 1.4"/>
<line x1="605" y1="116.2" x2="618.3" y2="116.2" stroke="#666" stroke-width="1.3" />
<path d="M625.0,109.5 h5 l-2.5,3 z" fill="#666" />
<text x="518.8" y="143.5" font-size="12" fill="#6a6a6a" textLength="30" lengthAdjust="spacingAndGlyphs" font-family="'Liberation Sans','DejaVu Sans',sans-serif" >Абзац</text>
<path d="M635.5,142.5 v-5 h5 M638.0,140.0 l4,4 M642.0,141.0 v3 h-3" fill="none" stroke="#777" stroke-width="1" />
<line x1="646.3" y1="66" x2="646.3" y2="144" stroke="#d2d2d2" stroke-width="1" />
<rect x="651.5" y="67.5" width="353" height="55" fill="#fff" stroke="#c9c9c9" stroke-width="1" />
<rect x="653.5" y="70.5" width="66" height="50" fill="#fff" stroke="#c4c4c4" stroke-width="3" />
<text x="658.8" y="92" font-size="12.5" fill="#222" textLength="55.5" lengthAdjust="spacingAndGlyphs" font-family="'Liberation Sans','DejaVu Sans',sans-serif" >АаБбВвГг,</text>
<text x="657" y="114.3" font-size="12" fill="#6a6a6a" textLength="58.5" lengthAdjust="spacingAndGlyphs" font-family="'Liberation Sans','DejaVu Sans',sans-serif" >¶ Обычный</text>
<text x="726.3" y="92" font-size="12.5" fill="#222" textLength="55" lengthAdjust="spacingAndGlyphs" font-family="'Liberation Sans','DejaVu Sans',sans-serif" >АаБбВвГг,</text>
<text x="724.3" y="114.3" font-size="12" fill="#6a6a6a" textLength="59.5" lengthAdjust="spacingAndGlyphs" font-family="'Liberation Sans','DejaVu Sans',sans-serif" >¶ Без инте...</text>
<text x="793.8" y="93.3" font-size="19.5" fill="#3e74b8" textLength="55" lengthAdjust="spacingAndGlyphs" font-family="'Liberation Serif',serif" >АаБбВ</text>
<text x="792.5" y="114.3" font-size="12" fill="#6a6a6a" textLength="56" lengthAdjust="spacingAndGlyphs" font-family="'Liberation Sans','DejaVu Sans',sans-serif" >Заголово...</text>
<clipPath id="cs4"><rect x="858" y="68" width="58.5" height="40"/></clipPath>
<text x="861.3" y="92.5" font-size="15.5" fill="#3e74b8" font-family="'Liberation Serif',serif" clip-path="url(#cs4)" textLength="64" lengthAdjust="spacingAndGlyphs">АаБбВвГ</text>
<text x="860" y="114.3" font-size="12" fill="#6a6a6a" textLength="56" lengthAdjust="spacingAndGlyphs" font-family="'Liberation Sans','DejaVu Sans',sans-serif" >Заголово...</text>
<clipPath id="cs5"><rect x="925" y="75" width="60" height="40"/></clipPath>
<text x="929.3" y="93.3" font-size="34.5" fill="#111" textLength="55.5" lengthAdjust="spacingAndGlyphs" font-family="'Liberation Serif',serif" clip-path="url(#cs5)">АаЬ</text>
<text x="929.5" y="114.3" font-size="12" fill="#6a6a6a" textLength="53.5" lengthAdjust="spacingAndGlyphs" font-family="'Liberation Sans','DejaVu Sans',sans-serif" >Заголовок</text>
<rect x="992" y="67.5" width="12.5" height="18.5" fill="#e4e4e4" stroke="#c9c9c9" stroke-width="1" />
<path d="M995.5,78.5 h5 l-2.5,-3 z" fill="#bdbdbd" />
<rect x="992" y="86" width="12.5" height="18" fill="#fff" stroke="#c9c9c9" stroke-width="1" />
<path d="M995.5,94.0 h5 l-2.5,3 z" fill="#666" />
<rect x="992" y="104" width="12.5" height="18.5" fill="#fff" stroke="#c9c9c9" stroke-width="1" />
<line x1="995.5" y1="110.5" x2="1000.5" y2="110.5" stroke="#666" stroke-width="1.1" />
<path d="M995.5,113.0 h5 l-2.5,3 z" fill="#666" />
<text x="807" y="143.5" font-size="12" fill="#6a6a6a" textLength="28.8" lengthAdjust="spacingAndGlyphs" font-family="'Liberation Sans','DejaVu Sans',sans-serif" >Стили</text>
<path d="M1001.5,142.5 v-5 h5 M1004.0,140.0 l4,4 M1008.0,141.0 v3 h-3" fill="none" stroke="#777" stroke-width="1" />
<line x1="1012.5" y1="66" x2="1012.5" y2="144" stroke="#d2d2d2" stroke-width="1" />
<circle cx="1027.5" cy="73" r="3.8" fill="none" stroke="#3c6fb4" stroke-width="1.6"/>
<line x1="1024.7" y1="76" x2="1020.5" y2="80.2" stroke="#3c6fb4" stroke-width="2" />
<text x="1037" y="79.3" font-size="12.5" fill="#444444" textLength="31" lengthAdjust="spacingAndGlyphs" font-family="'Liberation Sans','DejaVu Sans',sans-serif" >Найти</text>
<path d="M1078.0,73.5 h5 l-2.5,3 z" fill="#666" />
<text x="1018.8" y="95.5" font-size="9.5" fill="#555" textLength="10.5" lengthAdjust="spacingAndGlyphs" font-family="'Liberation Sans','DejaVu Sans',sans-serif" >ab</text>
<text x="1030" y="95.5" font-size="1" fill="#444" ></text>
<text x="1025" y="95.5" font-size="9.5" fill="#8e4bb0" textLength="5" lengthAdjust="spacingAndGlyphs" font-family="'Liberation Sans','DejaVu Sans',sans-serif" >b</text>
<text x="1023" y="102.5" font-size="9.5" fill="#555" textLength="10.5" lengthAdjust="spacingAndGlyphs" font-family="'Liberation Sans','DejaVu Sans',sans-serif" >ac</text>
<path d="M1019,99 q0,2.5 3,2.5 M1020.5,100 l1.8,1.6 l-1.8,1.4" fill="none" stroke="#3c6fb4" stroke-width="1" />
<text x="1037" y="100.8" font-size="12.5" fill="#444444" textLength="49.3" lengthAdjust="spacingAndGlyphs" font-family="'Liberation Sans','DejaVu Sans',sans-serif" >Заменить</text>
<path d="M1023,110.5 v12 l3,-3 l2,4.3 l1.5,-0.7 l-2,-4.2 h4 z" fill="#fff" stroke="#555" stroke-width="1" />
<text x="1037" y="122" font-size="12.5" fill="#444444" textLength="49.3" lengthAdjust="spacingAndGlyphs" font-family="'Liberation Sans','DejaVu Sans',sans-serif" >Выделить</text>
<path d="M1089.5,116.5 h5 l-2.5,3 z" fill="#666" />
<text x="1017.5" y="143.5" font-size="12" fill="#6a6a6a" textLength="81.8" lengthAdjust="spacingAndGlyphs" font-family="'Liberation Sans','DejaVu Sans',sans-serif" >Редактирование</text>
<line x1="1104.5" y1="66" x2="1104.5" y2="144" stroke="#d2d2d2" stroke-width="1" />
<path d="M1182.5,142.5 l3.8,-4 l3.8,4" fill="none" stroke="#555" stroke-width="1.6" />
<rect x="0" y="148" width="1200" height="27" fill="#fcf7b6" />
<line x1="0" y1="174.5" x2="1200" y2="174.5" stroke="#ece48f" stroke-width="1" />
<line x1="0" y1="148.5" x2="1200" y2="148.5" stroke="#f1ecae" stroke-width="1" />
<clipPath id="ci"><rect x="0" y="149" width="40" height="26"/></clipPath>
<circle cx="18.6" cy="162.2" r="10.6" fill="#3b78bc" clip-path="url(#ci)"/>
<text x="18.6" y="169" font-size="15.5" fill="#fff" font-weight="bold" font-family="'Liberation Sans','DejaVu Sans',sans-serif" text-anchor="middle" >i</text>
<text x="37.5" y="166.3" font-size="12" fill="#3b3b3b" textLength="200" lengthAdjust="spacingAndGlyphs" font-weight="bold" font-family="'Liberation Sans','DejaVu Sans',sans-serif" >ИНФОРМАЦИЯ О ПРОБНОЙ ВЕРСИИ</text>
<text x="248.5" y="166.3" font-size="12" fill="#444" textLength="433" lengthAdjust="spacingAndGlyphs" font-family="'Liberation Sans','DejaVu Sans',sans-serif" >Пробный период в Microsoft Office профессиональный 2016 дн истекает через 6 дн.</text>
<rect x="701.5" y="152.5" width="67" height="18.5" fill="#fdfdfd" stroke="#ababab" stroke-width="1" />
<text x="716" y="166" font-size="12.5" fill="#333" textLength="35.5" lengthAdjust="spacingAndGlyphs" font-family="'Liberation Sans','DejaVu Sans',sans-serif" >Купить</text>
<line x1="716" y1="167.8" x2="724" y2="167.8" stroke="#333" stroke-width="1" />
<path d="M1182.3,157 l7.8,8 M1190.1,157 l-7.8,8" fill="none" stroke="#505050" stroke-width="2" />
</svg></body></html>
